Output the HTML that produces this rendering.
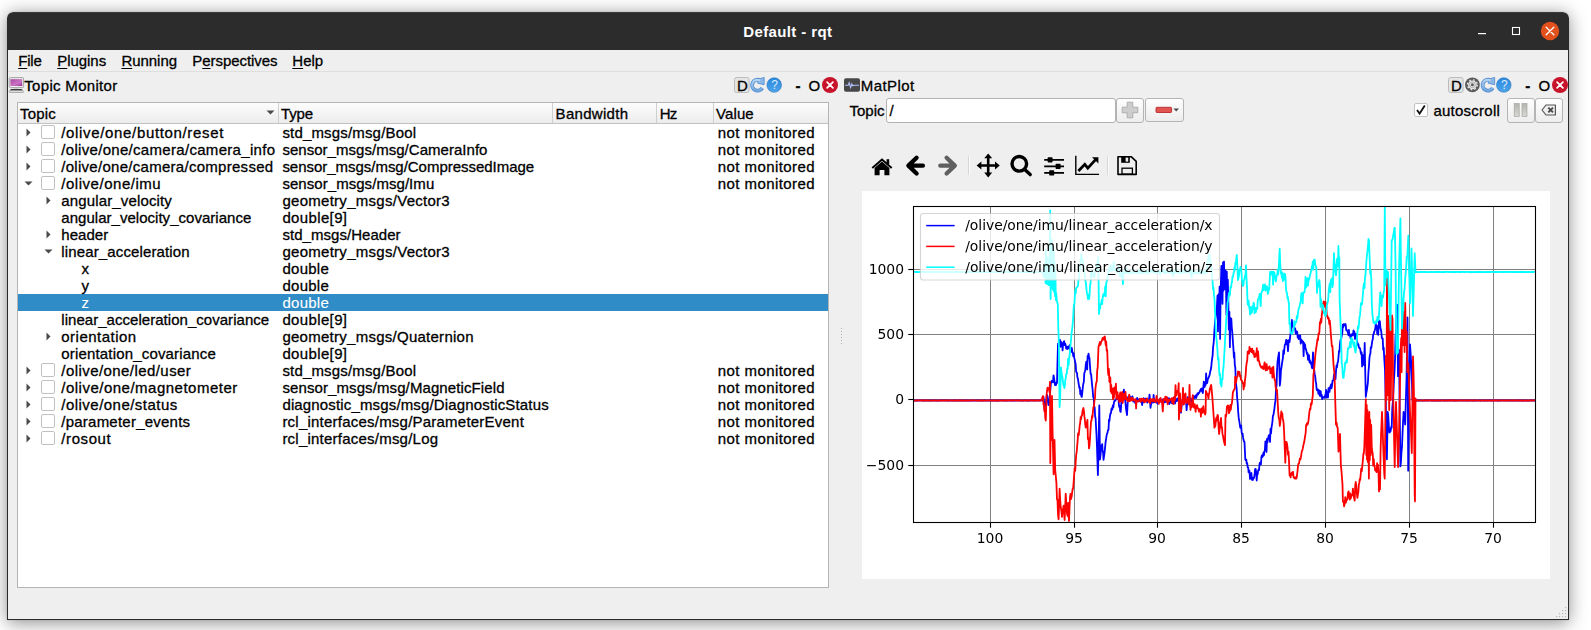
<!DOCTYPE html>
<html lang="en"><head><meta charset="utf-8"><title>Default - rqt</title>
<style>
html,body{margin:0;padding:0;}
body{width:1591px;height:630px;overflow:hidden;background:#fff;position:relative;font-family:"Liberation Sans", sans-serif;font-size:15px;color:#000;}
#win{position:absolute;left:7px;top:12px;width:1562px;height:608px;background:#efefef;border-radius:6px 6px 0 0;box-shadow:0 2.5px 18px 0 rgba(0,0,0,.44),0 0 1px rgba(0,0,0,.4);overflow:hidden;}
#tb{position:absolute;left:0;top:0;width:100%;height:38px;background:#2c2c2c;box-shadow:inset 0 1px 0 rgba(255,255,255,.07);border-radius:6px 6px 0 0;}
#edge{position:absolute;left:7px;top:50px;width:1560px;height:569px;border:1px solid #2b2b2b;border-top:none;}
.t{position:absolute;white-space:pre;line-height:1;font-size:15px;-webkit-text-stroke:0.3px currentColor;}
.t u{text-decoration:underline;text-underline-offset:1.5px;text-decoration-thickness:1.3px;}
.abs,.ab,.cb{position:absolute;}
.cb{width:12px;height:12px;border:1px solid #c0c0c0;background:#fff;border-radius:2px;}
#menuline{position:absolute;left:8px;top:71px;width:1560px;height:1px;background:#dedede;}
#tree{position:absolute;left:17px;top:102px;width:810px;height:484px;border:1px solid #b4b4b4;background:#fff;}
#hdr{position:absolute;left:18px;top:103px;width:810px;height:20px;background:linear-gradient(#fdfdfd,#ececec);border-bottom:1px solid #c2c2c2;}
.hs{position:absolute;top:103px;width:1px;height:20px;background:#cfcfcf;}
#sel{position:absolute;left:18px;top:294px;width:810px;height:17px;background:#308cc6;}
#inp{position:absolute;left:886px;top:98px;width:228px;height:23px;border:1px solid #b2b2b2;border-radius:3px;background:#fff;}
.btn{position:absolute;border:1px solid #b4b4b4;border-radius:3px;background:linear-gradient(#fefefe,#ededed);}
#canvas{position:absolute;left:862px;top:191px;width:688px;height:388px;background:#fff;}
</style></head><body>
<div id="win"><div id="tb"></div></div>
<div id="edge"></div>
<div id="menuline"></div>
<div id="tree"></div><div id="hdr"></div>
<div class="hs" style="left:278px"></div><div class="hs" style="left:552px"></div><div class="hs" style="left:656px"></div><div class="hs" style="left:713px"></div>
<svg class="abs" style="left:265.5px;top:109.5px" width="9" height="6" viewBox="0 0 9 6"><path d="M0.5 0.5 L8.5 0.5 L4.5 4.5 Z" fill="#4a4a4a"/></svg>
<div id="sel"></div>
<div id="inp"></div>
<div class="btn" style="left:1116px;top:98px;width:26px;height:23px"></div>
<div class="btn" style="left:1145px;top:98px;width:37px;height:22px"></div>
<div class="btn" style="left:1507px;top:98px;width:26px;height:23px"></div>
<div class="btn" style="left:1535px;top:98px;width:26px;height:23px"></div>
<div id="canvas"></div>
<svg class="abs" style="left:840px;top:327px" width="3" height="18" viewBox="0 0 3 18"><g fill="#aeaeae"><rect x="1" y="1" width="1" height="1"/><rect x="1" y="4" width="1" height="1"/><rect x="1" y="7" width="1" height="1"/><rect x="1" y="10" width="1" height="1"/><rect x="1" y="13" width="1" height="1"/><rect x="1" y="16" width="1" height="1"/></g></svg>
<div class="cb" style="left:41px;top:125px"></div>
<svg class="ab" style="left:26px;top:128px" width="6" height="9" viewBox="0 0 6 9"><path d="M0.5 0.5 L4.5 4.5 L0.5 8.5 Z" fill="#4a4a4a"/></svg>
<div class="cb" style="left:41px;top:142px"></div>
<svg class="ab" style="left:26px;top:145px" width="6" height="9" viewBox="0 0 6 9"><path d="M0.5 0.5 L4.5 4.5 L0.5 8.5 Z" fill="#4a4a4a"/></svg>
<div class="cb" style="left:41px;top:159px"></div>
<svg class="ab" style="left:26px;top:162px" width="6" height="9" viewBox="0 0 6 9"><path d="M0.5 0.5 L4.5 4.5 L0.5 8.5 Z" fill="#4a4a4a"/></svg>
<div class="cb" style="left:41px;top:176px"></div>
<svg class="ab" style="left:24px;top:181px" width="9" height="6" viewBox="0 0 9 6"><path d="M0.5 0.5 L8.5 0.5 L4.5 4.5 Z" fill="#4a4a4a"/></svg>
<svg class="ab" style="left:46px;top:196px" width="6" height="9" viewBox="0 0 6 9"><path d="M0.5 0.5 L4.5 4.5 L0.5 8.5 Z" fill="#4a4a4a"/></svg>
<svg class="ab" style="left:46px;top:230px" width="6" height="9" viewBox="0 0 6 9"><path d="M0.5 0.5 L4.5 4.5 L0.5 8.5 Z" fill="#4a4a4a"/></svg>
<svg class="ab" style="left:44px;top:249px" width="9" height="6" viewBox="0 0 9 6"><path d="M0.5 0.5 L8.5 0.5 L4.5 4.5 Z" fill="#4a4a4a"/></svg>
<svg class="ab" style="left:46px;top:332px" width="6" height="9" viewBox="0 0 6 9"><path d="M0.5 0.5 L4.5 4.5 L0.5 8.5 Z" fill="#4a4a4a"/></svg>
<div class="cb" style="left:41px;top:363px"></div>
<svg class="ab" style="left:26px;top:366px" width="6" height="9" viewBox="0 0 6 9"><path d="M0.5 0.5 L4.5 4.5 L0.5 8.5 Z" fill="#4a4a4a"/></svg>
<div class="cb" style="left:41px;top:380px"></div>
<svg class="ab" style="left:26px;top:383px" width="6" height="9" viewBox="0 0 6 9"><path d="M0.5 0.5 L4.5 4.5 L0.5 8.5 Z" fill="#4a4a4a"/></svg>
<div class="cb" style="left:41px;top:397px"></div>
<svg class="ab" style="left:26px;top:400px" width="6" height="9" viewBox="0 0 6 9"><path d="M0.5 0.5 L4.5 4.5 L0.5 8.5 Z" fill="#4a4a4a"/></svg>
<div class="cb" style="left:41px;top:414px"></div>
<svg class="ab" style="left:26px;top:417px" width="6" height="9" viewBox="0 0 6 9"><path d="M0.5 0.5 L4.5 4.5 L0.5 8.5 Z" fill="#4a4a4a"/></svg>
<div class="cb" style="left:41px;top:431px"></div>
<svg class="ab" style="left:26px;top:434px" width="6" height="9" viewBox="0 0 6 9"><path d="M0.5 0.5 L4.5 4.5 L0.5 8.5 Z" fill="#4a4a4a"/></svg>
<!-- title bar buttons -->
<svg class="abs" style="left:1470px;top:20px" width="95" height="24" viewBox="1470 20 95 24">
 <rect x="1478" y="33" width="8" height="1.2" fill="#fff"/>
 <rect x="1512.5" y="27.5" width="7" height="7" fill="none" stroke="#fff" stroke-width="1.1"/>
 <circle cx="1550" cy="31" r="9.2" fill="#e2511c"/>
 <path d="M1546.2 27.2 L1553.8 34.8 M1553.8 27.2 L1546.2 34.8" stroke="#fff" stroke-width="1.3" stroke-linecap="round"/>
</svg>
<!-- Topic monitor icon -->
<svg class="abs" style="left:8px;top:77px" width="17" height="16" viewBox="0 0 17 16">
 <defs><linearGradient id="scr" x1="0" y1="0" x2="1" y2="1"><stop offset="0" stop-color="#a8489f"/><stop offset="0.6" stop-color="#cc74c6"/><stop offset="1" stop-color="#9a2f92"/></linearGradient></defs>
 <rect x="1.2" y="0.6" width="14.4" height="10" rx="1.2" fill="#ececec" stroke="#9c9c9c" stroke-width="0.9"/>
 <rect x="2.4" y="2.2" width="11.8" height="6.8" fill="url(#scr)"/>
 <rect x="6" y="10.9" width="4.6" height="1.2" fill="#cfcfcf"/>
 <path d="M2.8 12.1 H13.8 L15 13.7 H1.6 Z" fill="#3c3c3c"/>
 <rect x="1.2" y="13.8" width="14.4" height="1.7" rx="0.8" fill="#f4f4f4" stroke="#9c9c9c" stroke-width="0.8"/>
</svg>
<!-- dock button group: left dock -->
<svg class="abs" style="left:733px;top:76px" width="107" height="18" viewBox="733 76 107 18">
 <defs>
  <linearGradient id="hb" x1="0" y1="0" x2="0" y2="1"><stop offset="0" stop-color="#2a86dc"/><stop offset="1" stop-color="#4ea6ea"/></linearGradient>
  <linearGradient id="rb" x1="0" y1="0" x2="0" y2="1"><stop offset="0" stop-color="#b4d3f0"/><stop offset="1" stop-color="#74a7de"/></linearGradient>
 </defs>
 <rect x="734.5" y="77.5" width="14.6" height="15" rx="2" fill="#e4e4e4" stroke="#bdbdbd"/>
 <g transform="translate(750,77)">
  <path d="M10.2 3.5 A5.4 5.4 0 1 0 12.2 10.9" fill="none" stroke="#4f8bd0" stroke-width="3.9"/><path d="M8.8 2.0 L14.2 0.4 L14.1 7.7 L7.6 6.2 Z" fill="#8ab7e6" stroke="#4f8bd0" stroke-width="0.8" stroke-linejoin="round"/><path d="M10.2 3.5 A5.4 5.4 0 1 0 12.2 10.9" fill="none" stroke="url(#rb)" stroke-width="2.3"/>
 </g>
 <circle cx="774.2" cy="85" r="7.3" fill="url(#hb)" stroke="#2c78bd" stroke-width="0.6"/>
 <circle cx="830" cy="85" r="8" fill="#c8142b"/>
 <path d="M827.1 82.1 L832.9 87.9 M832.9 82.1 L827.1 87.9" stroke="#fff" stroke-width="1.7" stroke-linecap="round"/>
</svg>
<span class="t" style="left:771.3px;top:78.5px;font-size:12px;color:#dcecfb;-webkit-text-stroke:0;">?</span>
<!-- matplot icon -->
<svg class="abs" style="left:843px;top:77px" width="18" height="16" viewBox="0 0 18 16">
 <rect x="1" y="1.2" width="16" height="13.5" rx="2" fill="#47474a"/>
 <path d="M2 8.2 L5.2 8.2 L6.2 5.8 L7.6 10.4 L8.8 7 L9.8 8.8 L11 8.2 L16 8.2" fill="none" stroke="#b3bffa" stroke-width="1.15"/>
</svg>
<!-- dock button group: right dock -->
<svg class="abs" style="left:1447px;top:76px" width="122" height="18" viewBox="1447 76 122 18">
 <rect x="1448.5" y="77.5" width="14.6" height="15" rx="2" fill="#e4e4e4" stroke="#bdbdbd"/>
 <circle cx="1472.4" cy="84.8" r="7.4" fill="#5b5b5b"/>
 <circle cx="1472.4" cy="84.8" r="4.9" fill="none" stroke="#e4e4e4" stroke-width="1.3" stroke-dasharray="1.75 2.1"/>
 <circle cx="1472.4" cy="84.8" r="4.4" fill="#e6e6e6"/>
 <circle cx="1472.4" cy="84.8" r="2.9" fill="none" stroke="#8e8e8e" stroke-width="0.6"/>
 <circle cx="1472.4" cy="84.8" r="1.5" fill="#5b5b5b"/>
 <g transform="translate(1480.5,77)">
  <path d="M10.2 3.5 A5.4 5.4 0 1 0 12.2 10.9" fill="none" stroke="#4f8bd0" stroke-width="3.9"/><path d="M8.8 2.0 L14.2 0.4 L14.1 7.7 L7.6 6.2 Z" fill="#8ab7e6" stroke="#4f8bd0" stroke-width="0.8" stroke-linejoin="round"/><path d="M10.2 3.5 A5.4 5.4 0 1 0 12.2 10.9" fill="none" stroke="url(#rb)" stroke-width="2.3"/>
 </g>
 <circle cx="1503.8" cy="85" r="7.3" fill="url(#hb)" stroke="#2c78bd" stroke-width="0.6"/>
 <circle cx="1560" cy="85" r="8" fill="#c8142b"/>
 <path d="M1557.1 82.1 L1562.9 87.9 M1562.9 82.1 L1557.1 87.9" stroke="#fff" stroke-width="1.7" stroke-linecap="round"/>
</svg>
<span class="t" style="left:1500.9px;top:78.5px;font-size:12px;color:#dcecfb;-webkit-text-stroke:0;">?</span>
<!-- plus button glyph -->
<svg class="abs" style="left:1121px;top:101px" width="18" height="18" viewBox="0 0 18 18">
 <path d="M6.2 1.2 H11.8 V6.2 H16.8 V11.8 H11.8 V16.8 H6.2 V11.8 H1.2 V6.2 H6.2 Z" fill="#cdcdcd" stroke="#a9a9a9" stroke-width="0.9"/>
</svg>
<!-- minus button glyph -->
<svg class="abs" style="left:1155px;top:106px" width="26" height="8" viewBox="0 0 26 8">
 <rect x="1" y="1.3" width="15.6" height="5.2" rx="0.8" fill="#e0534e" stroke="#b42a2f" stroke-width="0.9"/>
 <path d="M18.4 2.6 H24 L21.2 5.4 Z" fill="#4a4a4a"/>
</svg>
<!-- autoscroll checkbox -->
<svg class="abs" style="left:1414px;top:103px" width="14" height="14" viewBox="0 0 14 14">
 <rect x="0.5" y="0.5" width="13" height="13" rx="1.5" fill="#fff" stroke="#c2c2c2"/>
 <path d="M3 7 L5.6 10.6 L10.8 2.6" fill="none" stroke="#111" stroke-width="1.8" stroke-linejoin="miter"/>
</svg>
<!-- pause glyph -->
<svg class="abs" style="left:1513px;top:102px" width="16" height="16" viewBox="0 0 16 16">
 <defs><linearGradient id="pg" x1="0" y1="0" x2="0" y2="1"><stop offset="0" stop-color="#b5b5b1"/><stop offset="1" stop-color="#d6d7d2"/></linearGradient></defs>
 <rect x="1.2" y="1.6" width="5" height="12.8" fill="url(#pg)" stroke="#a5a5a2" stroke-width="0.7"/>
 <rect x="9" y="1.6" width="5" height="12.8" fill="url(#pg)" stroke="#a5a5a2" stroke-width="0.7"/>
</svg>
<!-- clear (backspace) glyph -->
<svg class="abs" style="left:1541px;top:104px" width="16" height="12" viewBox="0 0 16 12">
 <path d="M5 1 H14.4 V11 H5 L1 6 Z" fill="#efefef" stroke="#555" stroke-width="1.2" stroke-linejoin="round"/>
 <path d="M7.3 3.6 L12 8.4 M12 3.6 L7.3 8.4" stroke="#4a4a4a" stroke-width="2"/>
</svg>
<!-- matplotlib toolbar -->
<svg class="abs" style="left:866px;top:150px" width="280" height="32" viewBox="866 150 280 32">
 <!-- home -->
 <path d="M872.3 167.9 L882 159.6 L891.7 167.9" fill="none" stroke="#000" stroke-width="2"/>
 <path d="M874.6 168 L882 161.6 L889.4 168 V175.2 H884.4 V170 H879.6 V175.2 H874.6 Z" fill="#000"/>
 <rect x="886.6" y="159.2" width="2.6" height="5" fill="#000"/>
 <!-- back -->
 <path d="M916.6 157.8 L908.4 165.65 L916.6 173.5 M909.4 165.65 H922.9" fill="none" stroke="#000" stroke-width="4.3" stroke-linecap="round" stroke-linejoin="round"/>
 <!-- forward -->
 <path d="M946.6 157.8 L954.8 165.65 L946.6 173.5 M953.8 165.65 H940.3" fill="none" stroke="#606060" stroke-width="4.3" stroke-linecap="round" stroke-linejoin="round"/>
 <!-- sep -->
 <rect x="968" y="156" width="1" height="19" fill="#d6d6d6"/><rect x="969" y="156" width="1" height="19" fill="#fbfbfb"/>
 <!-- move -->
 <path d="M988.2 156 V175 M978.8 165.5 H997.6" stroke="#000" stroke-width="2.6"/>
 <path d="M988.2 153.4 L992.2 158.2 H984.2 Z M988.2 177.4 L992.2 172.6 H984.2 Z M976.6 165.5 L981.4 161.5 V169.5 Z M999.8 165.5 L995 161.5 V169.5 Z" fill="#000"/>
 <!-- zoom -->
 <circle cx="1019.3" cy="163.8" r="7.3" fill="none" stroke="#000" stroke-width="3.4"/>
 <path d="M1025 169.8 L1030.2 174.6" stroke="#000" stroke-width="3.4" stroke-linecap="round"/>
 <!-- sliders -->
 <path d="M1044.2 159.8 H1064 M1044.2 166.4 H1064 M1044.2 172.9 H1064" stroke="#000" stroke-width="1.7"/>
 <rect x="1047.6" y="157.2" width="5" height="5.2" rx="0.8" fill="#000"/>
 <rect x="1055.6" y="163.8" width="5" height="5.2" rx="0.8" fill="#000"/>
 <rect x="1049.2" y="170.3" width="5" height="5.2" rx="0.8" fill="#000"/>
 <!-- chart -->
 <path d="M1075.8 155.8 V174.4 H1099" fill="none" stroke="#000" stroke-width="1.4"/>
 <path d="M1078.4 171 L1084.8 164.4 L1087.8 168.2 L1095.6 159.6" fill="none" stroke="#000" stroke-width="2.8"/>
 <path d="M1092 157.2 H1098.4 V163.6 Z" fill="#000"/>
 <!-- sep -->
 <rect x="1107" y="156" width="1" height="19" fill="#d6d6d6"/><rect x="1108" y="156" width="1" height="19" fill="#fbfbfb"/>
 <!-- save -->
 <path d="M1118 156.8 H1131.4 L1136.2 161.4 V174.4 H1118 Z" fill="none" stroke="#000" stroke-width="1.6" stroke-linejoin="round"/>
 <rect x="1121.2" y="156.8" width="8.6" height="6" fill="#000"/>
 <rect x="1125.6" y="157.6" width="2.6" height="4" fill="#efefef"/>
 <rect x="1122" y="168.2" width="10.4" height="6" fill="none" stroke="#000" stroke-width="1.3"/>
</svg>
<!-- size grip -->
<svg class="abs" style="left:1554px;top:605px" width="14" height="14" viewBox="0 0 14 14">
 <g fill="#b9b9b9"><rect x="11" y="2" width="1.2" height="1.2"/><rect x="8" y="5" width="1.2" height="1.2"/><rect x="11" y="5" width="1.2" height="1.2"/><rect x="5" y="8" width="1.2" height="1.2"/><rect x="8" y="8" width="1.2" height="1.2"/><rect x="11" y="8" width="1.2" height="1.2"/><rect x="2" y="11" width="1.2" height="1.2"/><rect x="5" y="11" width="1.2" height="1.2"/><rect x="8" y="11" width="1.2" height="1.2"/><rect x="11" y="11" width="1.2" height="1.2"/></g>
</svg>

<svg class="abs" style="left:862px;top:191px;will-change:transform" width="688" height="388" viewBox="862 191 688 388">
<defs><clipPath id="ax"><rect x="913.5" y="206.5" width="622.0" height="316.0"/></clipPath></defs>
<g stroke="#808080" stroke-width="1" shape-rendering="crispEdges">
<line x1="990.5" y1="206.5" x2="990.5" y2="522.5"/>
<line x1="1074.5" y1="206.5" x2="1074.5" y2="522.5"/>
<line x1="1157.5" y1="206.5" x2="1157.5" y2="522.5"/>
<line x1="1241.5" y1="206.5" x2="1241.5" y2="522.5"/>
<line x1="1325.5" y1="206.5" x2="1325.5" y2="522.5"/>
<line x1="1409.5" y1="206.5" x2="1409.5" y2="522.5"/>
<line x1="1493.5" y1="206.5" x2="1493.5" y2="522.5"/>
<line x1="913.5" y1="269.5" x2="1535.5" y2="269.5"/>
<line x1="913.5" y1="334.5" x2="1535.5" y2="334.5"/>
<line x1="913.5" y1="399.5" x2="1535.5" y2="399.5"/>
<line x1="913.5" y1="465.5" x2="1535.5" y2="465.5"/>
</g>
<g clip-path="url(#ax)" fill="none" stroke-width="1.8" stroke-linejoin="round">
<path d="M913.0 400.5 L913.5 400.6 L913.9 400.5 L914.4 400.5 L914.8 400.4 L915.3 400.5 L915.7 400.6 L916.2 400.5 L916.6 400.6 L917.1 400.5 L917.5 400.5 L918.0 400.5 L918.4 400.3 L918.9 400.6 L919.3 400.6 L919.8 400.5 L920.2 400.3 L920.7 400.3 L921.1 400.4 L921.6 400.5 L922.0 400.5 L922.5 400.5 L922.9 400.6 L923.4 400.4 L923.8 400.5 L924.3 400.5 L924.7 400.4 L925.2 400.7 L925.6 400.6 L926.1 400.6 L926.5 400.4 L927.0 400.4 L927.4 400.5 L927.9 400.5 L928.3 400.6 L928.8 400.5 L929.2 400.5 L929.7 400.4 L930.2 400.4 L930.6 400.6 L931.1 400.4 L931.5 400.5 L932.0 400.5 L932.4 400.4 L932.9 400.5 L933.3 400.6 L933.8 400.3 L934.2 400.5 L934.7 400.5 L935.1 400.4 L935.6 400.5 L936.0 400.5 L936.5 400.4 L936.9 400.6 L937.4 400.6 L937.8 400.6 L938.3 400.6 L938.7 400.5 L939.2 400.5 L939.6 400.4 L940.1 400.6 L940.5 400.4 L941.0 400.5 L941.4 400.4 L941.9 400.4 L942.3 400.4 L942.8 400.6 L943.2 400.3 L943.7 400.4 L944.1 400.5 L944.6 400.6 L945.0 400.6 L945.5 400.3 L946.0 400.2 L946.4 400.5 L946.9 400.4 L947.3 400.4 L947.8 400.6 L948.2 400.6 L948.7 400.5 L949.1 400.5 L949.6 400.5 L950.0 400.7 L950.5 400.6 L950.9 400.6 L951.4 400.6 L951.8 400.3 L952.3 400.6 L952.7 400.6 L953.2 400.6 L953.6 400.3 L954.1 400.4 L954.5 400.6 L955.0 400.3 L955.4 400.5 L955.9 400.6 L956.3 400.4 L956.8 400.7 L957.2 400.6 L957.7 400.5 L958.1 400.5 L958.6 400.6 L959.0 400.5 L959.5 400.6 L959.9 400.4 L960.4 400.5 L960.8 400.6 L961.3 400.5 L961.8 400.4 L962.2 400.6 L962.7 400.6 L963.1 400.5 L963.6 400.4 L964.0 400.5 L964.5 400.5 L964.9 400.5 L965.4 400.6 L965.8 400.4 L966.3 400.6 L966.7 400.4 L967.2 400.4 L967.6 400.6 L968.1 400.6 L968.5 400.6 L969.0 400.5 L969.4 400.5 L969.9 400.5 L970.3 400.6 L970.8 400.5 L971.2 400.5 L971.7 400.6 L972.1 400.5 L972.6 400.6 L973.0 400.6 L973.5 400.7 L973.9 400.5 L974.4 400.5 L974.8 400.5 L975.3 400.5 L975.7 400.6 L976.2 400.5 L976.6 400.5 L977.1 400.7 L977.5 400.2 L978.0 400.4 L978.5 400.5 L978.9 400.5 L979.4 400.5 L979.8 400.5 L980.3 400.6 L980.7 400.5 L981.2 400.4 L981.6 400.7 L982.1 400.5 L982.5 400.4 L983.0 400.5 L983.4 400.5 L983.9 400.5 L984.3 400.2 L984.8 400.5 L985.2 400.6 L985.7 400.4 L986.1 400.5 L986.6 400.6 L987.0 400.6 L987.5 400.6 L987.9 400.3 L988.4 400.5 L988.8 400.5 L989.3 400.6 L989.7 400.6 L990.2 400.2 L990.6 400.6 L991.1 400.4 L991.5 400.6 L992.0 400.4 L992.4 400.5 L992.9 400.6 L993.3 400.5 L993.8 400.5 L994.2 400.6 L994.7 400.5 L995.2 400.5 L995.6 400.7 L996.1 400.6 L996.5 400.5 L997.0 400.8 L997.4 400.4 L997.9 400.6 L998.3 400.5 L998.8 400.5 L999.2 400.6 L999.7 400.5 L1000.1 400.6 L1000.6 400.3 L1001.0 400.3 L1001.5 400.6 L1001.9 400.4 L1002.4 400.4 L1002.8 400.4 L1003.3 400.6 L1003.7 400.6 L1004.2 400.6 L1004.6 400.4 L1005.1 400.5 L1005.5 400.4 L1006.0 400.6 L1006.4 400.7 L1006.9 400.4 L1007.3 400.7 L1007.8 400.6 L1008.2 400.5 L1008.7 400.3 L1009.1 400.6 L1009.6 400.5 L1010.0 400.4 L1010.5 400.5 L1011.0 400.5 L1011.4 400.6 L1011.9 400.4 L1012.3 400.6 L1012.8 400.6 L1013.2 400.6 L1013.7 400.5 L1014.1 400.4 L1014.6 400.6 L1015.0 400.5 L1015.5 400.5 L1015.9 400.6 L1016.4 400.5 L1016.8 400.3 L1017.3 400.5 L1017.7 400.3 L1018.2 400.6 L1018.6 400.5 L1019.1 400.4 L1019.5 400.5 L1020.0 400.6 L1020.4 400.5 L1020.9 400.6 L1021.3 400.5 L1021.8 400.6 L1022.2 400.6 L1022.7 400.7 L1023.1 400.4 L1023.6 400.6 L1024.0 400.3 L1024.5 400.4 L1024.9 400.3 L1025.4 400.6 L1025.8 400.4 L1026.3 400.5 L1026.8 400.5 L1027.2 400.5 L1027.7 400.4 L1028.1 400.5 L1028.6 400.7 L1029.0 400.5 L1029.5 400.6 L1029.9 400.6 L1030.4 400.5 L1030.8 400.4 L1031.3 400.4 L1031.7 400.6 L1032.2 400.3 L1032.6 400.4 L1033.1 400.6 L1033.5 400.6 L1034.0 400.5 L1034.4 400.6 L1034.9 400.5 L1035.3 400.4 L1035.8 400.3 L1036.2 400.4 L1036.7 400.6 L1037.1 400.4 L1037.6 400.4 L1038.0 400.4 L1038.5 400.3 L1038.9 400.5 L1039.4 400.4 L1039.8 400.5 L1040.3 400.3 L1040.7 400.5 L1041.2 400.4 L1041.6 400.3 L1042.1 400.6 L1042.5 400.5 L1043.0 400.5 L1043.5 396.9 L1044.0 400.9 L1044.5 409.6 L1045.0 405.0 L1045.5 402.5 L1046.0 400.8 L1046.5 398.5 L1047.0 395.0 L1047.5 396.5 L1048.0 402.2 L1048.5 405.2 L1049.0 404.0 L1049.5 400.9 L1050.0 393.1 L1050.4 389.2 L1050.9 383.4 L1051.4 381.4 L1051.9 380.8 L1052.5 381.8 L1053.0 382.3 L1053.5 375.3 L1054.0 377.8 L1054.5 381.2 L1055.0 385.1 L1055.5 382.8 L1056.0 385.2 L1056.5 382.4 L1057.0 383.0 L1057.5 361.7 L1058.0 343.7 L1058.5 346.1 L1059.0 339.8 L1059.5 343.3 L1060.0 340.0 L1060.5 346.8 L1061.0 341.7 L1061.5 345.3 L1062.1 343.3 L1062.6 350.4 L1063.1 343.2 L1063.6 342.0 L1064.1 341.1 L1064.6 345.1 L1065.2 343.7 L1065.7 345.3 L1066.2 348.5 L1066.7 346.9 L1067.2 349.0 L1067.6 347.8 L1068.1 346.3 L1068.6 348.2 L1069.0 348.5 L1069.5 346.6 L1070.0 344.8 L1070.4 350.8 L1070.9 348.2 L1071.4 351.8 L1071.8 348.0 L1072.3 351.6 L1072.8 353.1 L1073.3 356.4 L1073.7 353.5 L1074.2 357.6 L1074.7 359.6 L1075.2 362.6 L1075.6 363.4 L1076.1 371.2 L1076.5 372.5 L1077.0 372.9 L1077.4 377.4 L1077.9 378.6 L1078.4 382.1 L1078.9 385.1 L1079.4 388.1 L1079.8 387.3 L1080.3 394.1 L1080.8 390.6 L1081.3 396.2 L1081.8 396.9 L1082.3 392.6 L1082.8 387.5 L1083.3 383.7 L1083.8 382.0 L1084.3 373.1 L1084.8 371.8 L1085.3 369.9 L1085.8 364.3 L1086.3 361.7 L1086.7 364.0 L1087.2 369.5 L1087.6 356.0 L1088.1 358.3 L1088.5 353.7 L1089.0 356.4 L1089.5 358.2 L1090.1 367.9 L1090.6 373.8 L1091.1 374.0 L1091.6 379.6 L1092.2 386.0 L1092.7 390.5 L1093.2 397.1 L1093.7 398.0 L1094.2 406.4 L1094.7 407.7 L1095.1 416.2 L1095.6 418.4 L1096.1 427.7 L1096.5 434.8 L1097.0 447.1 L1097.5 462.8 L1097.9 475.0 L1098.4 455.2 L1098.8 431.1 L1099.3 405.5 L1100.0 459.5 L1100.6 454.4 L1101.1 448.5 L1101.7 445.2 L1102.2 444.1 L1102.6 450.7 L1103.1 452.4 L1103.5 459.8 L1104.0 456.3 L1104.5 453.1 L1105.1 447.4 L1105.6 442.0 L1106.1 438.8 L1106.6 435.6 L1107.0 433.8 L1107.5 432.6 L1108.0 430.0 L1108.5 429.8 L1109.0 419.6 L1109.4 421.1 L1109.9 416.6 L1110.4 413.5 L1110.9 413.3 L1111.4 409.3 L1111.8 408.1 L1112.3 409.7 L1112.8 405.5 L1113.3 407.3 L1113.9 402.8 L1114.5 400.7 L1115.0 401.0 L1115.5 400.3 L1116.0 399.4 L1116.5 398.1 L1117.0 398.8 L1117.5 396.9 L1118.0 396.0 L1118.5 398.5 L1118.9 404.8 L1119.3 407.2 L1119.8 406.1 L1120.2 411.2 L1120.7 411.9 L1121.3 403.3 L1122.0 398.0 L1122.5 394.9 L1123.0 394.8 L1123.4 392.1 L1123.9 389.7 L1124.4 395.4 L1124.9 397.5 L1125.5 403.1 L1126.0 408.5 L1126.5 411.9 L1127.0 415.0 L1127.5 406.3 L1128.0 397.2 L1128.5 397.0 L1129.0 397.2 L1129.5 395.6 L1130.0 398.1 L1130.5 399.4 L1131.0 397.2 L1131.5 399.6 L1132.0 399.8 L1132.5 396.5 L1132.9 399.6 L1133.4 401.7 L1133.8 400.6 L1134.3 400.9 L1134.8 400.8 L1135.2 403.0 L1135.7 402.6 L1136.2 400.0 L1136.6 400.9 L1137.1 398.0 L1137.5 399.3 L1138.0 399.1 L1138.5 401.3 L1138.9 401.5 L1139.4 400.9 L1139.8 398.7 L1140.3 400.5 L1140.8 400.4 L1141.2 401.5 L1141.7 402.9 L1142.2 405.0 L1142.6 400.9 L1143.1 399.5 L1143.5 398.2 L1144.0 402.4 L1144.5 401.5 L1144.9 400.3 L1145.4 398.6 L1145.8 400.2 L1146.3 399.2 L1146.8 398.7 L1147.2 402.7 L1147.7 401.1 L1148.2 399.8 L1148.6 399.6 L1149.1 399.2 L1149.5 394.6 L1150.0 400.2 L1150.5 407.8 L1150.9 405.0 L1151.8 401.9 L1152.3 401.6 L1152.7 399.5 L1153.2 402.5 L1153.6 394.9 L1154.1 400.5 L1154.5 400.4 L1155.0 402.4 L1155.4 401.7 L1155.9 400.8 L1156.3 401.2 L1156.8 402.7 L1157.3 401.5 L1157.7 403.8 L1158.2 400.6 L1158.6 401.4 L1159.1 402.0 L1159.5 400.0 L1160.0 398.8 L1160.4 401.5 L1160.9 399.8 L1161.4 401.1 L1161.8 400.9 L1162.3 400.6 L1162.7 402.1 L1163.2 399.1 L1163.6 400.1 L1164.1 401.2 L1164.5 402.4 L1165.0 400.9 L1165.4 401.9 L1165.9 400.3 L1166.4 401.7 L1166.8 401.4 L1167.3 400.3 L1167.7 397.9 L1168.2 399.3 L1168.6 400.7 L1169.1 404.1 L1169.5 398.5 L1170.0 402.9 L1170.4 400.6 L1170.9 400.4 L1171.4 402.7 L1171.8 400.0 L1172.3 403.7 L1172.7 400.3 L1173.2 399.7 L1173.6 397.6 L1174.1 400.8 L1174.5 400.4 L1175.0 403.6 L1175.5 399.6 L1175.9 399.1 L1176.4 401.1 L1176.8 401.2 L1177.3 398.5 L1177.7 399.6 L1178.2 399.8 L1178.6 400.6 L1179.1 400.0 L1179.5 401.7 L1180.0 399.4 L1180.5 405.8 L1181.0 412.7 L1181.5 407.5 L1182.0 401.4 L1182.5 400.6 L1183.0 401.8 L1183.5 400.5 L1184.0 398.0 L1184.5 401.1 L1185.0 399.6 L1185.5 400.4 L1186.0 399.6 L1186.6 410.2 L1187.2 402.7 L1187.7 397.1 L1188.2 402.7 L1188.6 400.7 L1189.1 398.1 L1189.6 397.4 L1190.1 400.2 L1190.6 401.1 L1191.0 399.7 L1191.5 401.9 L1192.0 399.0 L1192.5 398.1 L1192.9 399.7 L1193.4 396.0 L1193.9 398.2 L1194.3 396.5 L1194.8 396.8 L1195.2 397.9 L1195.7 395.4 L1196.2 397.9 L1196.6 396.5 L1197.1 394.3 L1197.6 393.2 L1198.0 394.6 L1198.5 392.9 L1199.0 393.3 L1199.5 392.3 L1199.9 390.8 L1200.4 390.2 L1200.9 389.0 L1201.4 390.9 L1201.9 388.4 L1202.3 391.5 L1202.8 393.1 L1203.3 388.0 L1203.8 381.7 L1204.2 382.3 L1204.7 387.0 L1205.2 383.0 L1205.7 385.0 L1206.1 373.4 L1206.6 380.5 L1207.1 383.0 L1207.5 381.1 L1208.0 378.6 L1208.5 378.1 L1208.9 376.8 L1209.4 375.7 L1209.8 373.8 L1210.3 371.0 L1210.7 370.1 L1211.2 367.5 L1211.7 362.0 L1212.2 358.1 L1212.6 355.6 L1213.1 346.8 L1213.6 343.7 L1214.1 336.1 L1214.7 326.4 L1215.2 319.9 L1215.7 317.2 L1216.2 312.0 L1216.7 309.8 L1217.5 295.6 L1218.0 331.4 L1218.5 294.3 L1219.0 308.0 L1219.6 286.7 L1220.1 338.9 L1220.6 292.4 L1221.4 266.0 L1221.9 282.8 L1222.5 303.8 L1223.0 262.5 L1223.5 290.5 L1224.0 261.6 L1224.5 289.1 L1224.9 270.1 L1225.4 286.7 L1225.9 271.2 L1226.4 314.7 L1226.8 271.6 L1227.3 309.2 L1227.8 279.7 L1228.3 300.3 L1228.8 329.5 L1229.4 312.0 L1229.9 347.2 L1230.4 318.1 L1230.8 320.8 L1231.3 318.6 L1231.8 327.8 L1232.3 332.6 L1232.9 341.5 L1233.4 348.4 L1233.9 357.5 L1234.3 352.5 L1234.8 364.8 L1235.3 367.5 L1235.9 383.3 L1236.6 388.0 L1237.1 397.1 L1237.7 403.3 L1238.2 411.9 L1238.7 417.9 L1239.3 421.1 L1239.8 424.6 L1240.3 427.8 L1240.7 427.3 L1241.2 425.5 L1241.6 432.1 L1242.1 434.0 L1242.6 433.6 L1243.1 437.7 L1243.5 439.9 L1244.0 441.4 L1244.5 442.0 L1245.3 459.5 L1245.8 460.3 L1246.3 459.7 L1246.7 463.7 L1247.2 463.2 L1247.7 467.4 L1248.2 467.5 L1248.6 472.4 L1249.1 470.4 L1249.5 470.9 L1250.0 478.9 L1250.4 473.8 L1250.9 474.6 L1251.4 473.0 L1251.8 479.6 L1252.3 477.7 L1252.8 480.0 L1253.2 477.6 L1253.7 478.5 L1254.2 476.7 L1254.7 473.8 L1255.1 469.1 L1255.6 469.0 L1256.1 471.6 L1256.7 480.5 L1257.2 473.8 L1257.7 474.2 L1258.1 470.7 L1258.6 469.5 L1259.0 470.2 L1259.5 464.2 L1259.9 462.6 L1260.4 462.7 L1260.9 464.5 L1261.4 457.2 L1261.9 455.3 L1262.4 457.1 L1262.9 456.1 L1263.4 452.6 L1263.9 455.4 L1264.4 451.6 L1264.9 449.8 L1265.4 441.4 L1266.0 446.4 L1266.5 452.0 L1267.0 438.9 L1267.5 442.0 L1268.0 438.6 L1268.5 436.5 L1269.0 435.1 L1269.5 435.7 L1270.0 442.0 L1270.5 428.9 L1271.0 433.5 L1271.5 427.7 L1272.0 424.7 L1272.5 421.3 L1272.9 415.9 L1273.4 415.1 L1273.9 411.9 L1274.4 408.8 L1275.0 403.1 L1275.5 400.8 L1276.0 389.1 L1276.6 385.0 L1277.0 371.4 L1277.5 362.0 L1278.0 358.1 L1278.5 355.3 L1279.0 352.4 L1279.8 385.7 L1280.4 380.8 L1281.0 370.0 L1281.5 367.0 L1282.0 363.5 L1282.5 360.5 L1282.9 357.8 L1283.4 350.3 L1283.9 354.0 L1284.4 348.6 L1284.8 344.9 L1285.3 344.4 L1285.8 341.8 L1286.2 340.0 L1286.7 344.5 L1287.1 340.4 L1287.6 344.6 L1288.0 351.2 L1288.5 342.9 L1289.0 340.0 L1289.5 342.2 L1289.9 339.2 L1290.4 334.5 L1290.9 331.7 L1291.4 330.7 L1291.9 319.9 L1292.3 326.7 L1292.8 326.2 L1293.3 326.2 L1293.8 327.5 L1294.3 327.1 L1294.8 329.2 L1295.2 328.6 L1295.7 333.6 L1296.2 331.2 L1296.7 332.4 L1297.2 331.7 L1297.7 337.6 L1298.2 335.7 L1298.7 339.0 L1299.2 335.6 L1299.7 338.4 L1300.2 335.4 L1300.7 343.6 L1301.2 339.7 L1301.7 340.3 L1302.2 341.2 L1302.6 342.8 L1303.1 341.6 L1303.6 356.0 L1304.1 342.9 L1304.6 347.4 L1305.0 344.4 L1305.5 348.4 L1306.0 349.2 L1306.5 351.6 L1307.0 354.2 L1307.5 353.0 L1308.0 359.8 L1308.5 355.4 L1309.0 355.2 L1309.5 362.1 L1310.0 360.3 L1310.5 363.7 L1310.9 362.1 L1311.4 363.7 L1311.8 367.4 L1312.3 368.3 L1313.0 352.4 L1313.6 360.4 L1314.1 368.8 L1314.7 374.6 L1315.2 376.1 L1315.7 381.7 L1316.1 382.8 L1316.6 388.9 L1317.0 390.3 L1317.5 389.3 L1318.0 389.7 L1318.4 393.8 L1318.8 390.3 L1319.3 390.3 L1319.8 395.8 L1320.2 395.2 L1320.7 391.2 L1321.2 396.6 L1321.7 394.8 L1322.2 399.1 L1322.7 397.1 L1323.2 397.7 L1323.7 397.6 L1324.2 396.8 L1324.7 397.8 L1325.2 395.4 L1325.6 393.9 L1326.1 389.8 L1326.6 397.7 L1327.1 391.7 L1327.6 392.9 L1328.0 397.5 L1328.5 388.1 L1329.0 390.5 L1329.5 391.9 L1330.0 387.3 L1330.5 386.4 L1331.0 384.4 L1331.5 388.4 L1332.0 385.7 L1332.5 380.8 L1333.0 380.6 L1333.5 379.6 L1334.0 374.3 L1334.5 378.7 L1335.0 372.4 L1335.5 379.1 L1336.0 371.4 L1336.5 365.3 L1337.0 367.4 L1337.5 362.8 L1338.0 362.1 L1338.5 357.0 L1339.0 350.9 L1339.5 351.8 L1339.9 344.6 L1340.4 340.2 L1340.9 339.7 L1341.4 337.7 L1341.9 334.5 L1342.3 333.1 L1342.8 324.6 L1343.3 327.0 L1343.8 324.1 L1344.3 324.7 L1344.8 325.4 L1345.3 324.0 L1345.7 324.6 L1346.2 330.2 L1346.6 329.5 L1347.1 331.1 L1347.5 331.1 L1348.0 333.3 L1348.5 335.3 L1348.9 329.8 L1349.4 335.7 L1349.8 334.1 L1350.3 336.9 L1350.7 338.4 L1351.2 336.5 L1351.7 334.9 L1352.1 334.0 L1352.6 335.4 L1353.0 334.8 L1353.5 330.3 L1353.9 333.2 L1354.4 331.7 L1354.9 338.9 L1355.4 337.1 L1356.0 333.8 L1356.5 338.1 L1357.0 340.7 L1357.5 342.9 L1358.0 345.2 L1358.4 344.3 L1358.9 347.3 L1359.3 348.0 L1359.8 348.0 L1360.2 348.8 L1360.7 352.4 L1361.2 354.3 L1361.6 352.4 L1362.1 366.4 L1362.5 354.7 L1363.0 360.3 L1363.6 357.0 L1364.1 365.2 L1364.7 342.9 L1365.2 370.2 L1365.8 396.8 L1366.3 393.2 L1366.8 390.6 L1367.4 386.4 L1367.9 382.5 L1368.4 372.7 L1368.9 367.0 L1369.4 358.7 L1369.9 354.6 L1370.4 353.6 L1370.8 347.1 L1371.3 348.0 L1371.8 344.4 L1372.3 340.7 L1372.8 339.2 L1373.2 334.5 L1373.7 334.1 L1374.2 331.7 L1374.7 330.6 L1375.3 328.6 L1375.8 323.8 L1376.3 326.9 L1376.8 325.6 L1377.2 333.8 L1377.7 330.7 L1378.2 334.9 L1379.0 320.6 L1379.5 320.8 L1379.9 321.6 L1380.4 328.1 L1380.8 329.3 L1381.3 331.7 L1381.8 337.7 L1382.3 338.6 L1382.7 338.4 L1383.2 349.6 L1383.7 347.6 L1384.3 359.2 L1385.0 370.0 L1385.5 392.0 L1386.0 412.4 L1386.4 440.5 L1386.9 459.3 L1387.7 411.9 L1388.2 415.2 L1388.8 425.1 L1389.3 432.5 L1389.8 429.2 L1390.3 431.8 L1390.7 430.6 L1391.2 426.8 L1391.7 427.7 L1392.3 408.2 L1393.0 400.0 L1393.5 389.8 L1394.0 379.1 L1394.5 371.6 L1395.0 360.0 L1395.5 336.6 L1396.1 331.7 L1396.7 314.1 L1397.2 304.8 L1398.0 376.2 L1398.5 363.3 L1399.0 350.0 L1399.5 391.3 L1399.9 426.2 L1400.4 466.4 L1400.9 462.3 L1401.5 451.8 L1402.0 446.8 L1402.5 434.2 L1403.1 420.9 L1403.6 411.9 L1404.1 415.0 L1404.7 418.4 L1405.2 424.6 L1405.8 402.5 L1406.5 380.0 L1407.0 349.3 L1407.5 317.5 L1408.2 470.7 L1409.0 400.0 L1409.5 371.1 L1410.0 344.4 L1410.5 351.2 L1411.0 359.8 L1411.5 369.8 L1412.0 384.5 L1412.5 400.5 L1413.0 399.6 L1413.5 402.5 L1414.0 405.4 L1414.5 403.3 L1415.0 403.1 L1415.5 400.2 L1416.0 400.5 L1416.5 400.5 L1416.9 400.3 L1417.4 400.4 L1417.8 400.6 L1418.3 400.5 L1418.7 400.5 L1419.2 400.5 L1419.6 400.5 L1420.1 400.4 L1420.5 400.5 L1421.0 400.5 L1421.4 400.7 L1421.9 400.5 L1422.3 400.7 L1422.8 400.7 L1423.2 400.7 L1423.7 400.6 L1424.1 400.5 L1424.6 400.5 L1425.0 400.5 L1425.5 400.4 L1425.9 400.5 L1426.4 400.4 L1426.8 400.7 L1427.3 400.6 L1427.7 400.5 L1428.2 400.3 L1428.6 400.5 L1429.1 400.5 L1429.5 400.4 L1430.0 400.4 L1430.4 400.3 L1430.9 400.6 L1431.3 400.5 L1431.8 400.8 L1432.2 400.5 L1432.7 400.5 L1433.1 400.6 L1433.6 400.5 L1434.0 400.5 L1434.5 400.5 L1434.9 400.4 L1435.4 400.6 L1435.8 400.6 L1436.3 400.7 L1436.8 400.5 L1437.2 400.5 L1437.7 400.4 L1438.1 400.6 L1438.6 400.4 L1439.0 400.6 L1439.5 400.6 L1439.9 400.6 L1440.4 400.4 L1440.8 400.6 L1441.3 400.4 L1441.7 400.4 L1442.2 400.4 L1442.6 400.6 L1443.1 400.7 L1443.5 400.4 L1444.0 400.4 L1444.4 400.5 L1444.9 400.8 L1445.3 400.6 L1445.8 400.4 L1446.2 400.3 L1446.7 400.4 L1447.1 400.6 L1447.6 400.7 L1448.0 400.5 L1448.5 400.4 L1448.9 400.4 L1449.4 400.3 L1449.8 400.6 L1450.3 400.4 L1450.7 400.6 L1451.2 400.3 L1451.6 400.4 L1452.1 400.5 L1452.5 400.4 L1453.0 400.6 L1453.4 400.5 L1453.9 400.4 L1454.3 400.6 L1454.8 400.6 L1455.2 400.3 L1455.7 400.7 L1456.2 400.5 L1456.6 400.6 L1457.1 400.3 L1457.5 400.4 L1458.0 400.5 L1458.4 400.6 L1458.9 400.4 L1459.3 400.4 L1459.8 400.3 L1460.2 400.5 L1460.7 400.5 L1461.1 400.3 L1461.6 400.4 L1462.0 400.6 L1462.5 400.7 L1462.9 400.6 L1463.4 400.5 L1463.8 400.4 L1464.3 400.4 L1464.7 400.4 L1465.2 400.5 L1465.6 400.5 L1466.1 400.7 L1466.5 400.5 L1467.0 400.4 L1467.4 400.7 L1467.9 400.6 L1468.3 400.5 L1468.8 400.4 L1469.2 400.3 L1469.7 400.4 L1470.1 400.6 L1470.6 400.4 L1471.0 400.4 L1471.5 400.5 L1471.9 400.5 L1472.4 400.6 L1472.8 400.6 L1473.3 400.6 L1473.7 400.4 L1474.2 400.6 L1474.6 400.4 L1475.1 400.6 L1475.5 400.5 L1476.0 400.5 L1476.5 400.6 L1476.9 400.5 L1477.4 400.6 L1477.8 400.6 L1478.3 400.5 L1478.7 400.4 L1479.2 400.4 L1479.6 400.4 L1480.1 400.5 L1480.5 400.5 L1481.0 400.8 L1481.4 400.6 L1481.9 400.6 L1482.3 400.4 L1482.8 400.4 L1483.2 400.5 L1483.7 400.5 L1484.1 400.4 L1484.6 400.7 L1485.0 400.4 L1485.5 400.6 L1485.9 400.3 L1486.4 400.5 L1486.8 400.5 L1487.3 400.5 L1487.7 400.6 L1488.2 400.5 L1488.6 400.5 L1489.1 400.3 L1489.5 400.4 L1490.0 400.3 L1490.4 400.6 L1490.9 400.5 L1491.3 400.5 L1491.8 400.4 L1492.2 400.4 L1492.7 400.7 L1493.1 400.7 L1493.6 400.5 L1494.0 400.6 L1494.5 400.3 L1494.9 400.3 L1495.4 400.5 L1495.8 400.4 L1496.3 400.4 L1496.8 400.5 L1497.2 400.8 L1497.7 400.4 L1498.1 400.5 L1498.6 400.5 L1499.0 400.5 L1499.5 400.6 L1499.9 400.7 L1500.4 400.4 L1500.8 400.5 L1501.3 400.5 L1501.7 400.5 L1502.2 400.3 L1502.6 400.3 L1503.1 400.3 L1503.5 400.6 L1504.0 400.5 L1504.4 400.5 L1504.9 400.3 L1505.3 400.5 L1505.8 400.4 L1506.2 400.4 L1506.7 400.4 L1507.1 400.6 L1507.6 400.6 L1508.0 400.5 L1508.5 400.6 L1508.9 400.4 L1509.4 400.5 L1509.8 400.5 L1510.3 400.6 L1510.7 400.5 L1511.2 400.5 L1511.6 400.5 L1512.1 400.4 L1512.5 400.7 L1513.0 400.6 L1513.4 400.5 L1513.9 400.7 L1514.3 400.6 L1514.8 400.3 L1515.2 400.6 L1515.7 400.6 L1516.2 400.7 L1516.6 400.6 L1517.1 400.6 L1517.5 400.4 L1518.0 400.4 L1518.4 400.5 L1518.9 400.6 L1519.3 400.4 L1519.8 400.5 L1520.2 400.5 L1520.7 400.5 L1521.1 400.5 L1521.6 400.5 L1522.0 400.4 L1522.5 400.6 L1522.9 400.7 L1523.4 400.5 L1523.8 400.6 L1524.3 400.5 L1524.7 400.6 L1525.2 400.5 L1525.6 400.4 L1526.1 400.6 L1526.5 400.6 L1527.0 400.4 L1527.4 400.7 L1527.9 400.7 L1528.3 400.7 L1528.8 400.7 L1529.2 400.6 L1529.7 400.5 L1530.1 400.4 L1530.6 400.4 L1531.0 400.5 L1531.5 400.5 L1531.9 400.6 L1532.4 400.3 L1532.8 400.7 L1533.3 400.7 L1533.7 400.5 L1534.2 400.6 L1534.6 400.5 L1535.1 400.5 L1535.5 400.5 L1536.0 400.5" stroke="#0000ff"/>
<path d="M913.0 400.6 L913.5 400.5 L913.9 400.5 L914.4 400.5 L914.8 400.6 L915.3 400.7 L915.7 400.5 L916.2 400.4 L916.6 400.5 L917.1 400.5 L917.5 400.4 L918.0 400.4 L918.4 400.5 L918.9 400.6 L919.3 400.4 L919.8 400.4 L920.2 400.5 L920.7 400.4 L921.1 400.5 L921.6 400.5 L922.0 400.5 L922.5 400.4 L922.9 400.5 L923.4 400.5 L923.8 400.5 L924.3 400.4 L924.7 400.6 L925.2 400.3 L925.6 400.5 L926.1 400.5 L926.5 400.6 L927.0 400.4 L927.4 400.6 L927.9 400.4 L928.3 400.6 L928.8 400.7 L929.2 400.5 L929.7 400.5 L930.1 400.4 L930.6 400.6 L931.0 400.6 L931.5 400.5 L931.9 400.4 L932.4 400.5 L932.8 400.6 L933.3 400.6 L933.7 400.6 L934.2 400.3 L934.6 400.4 L935.1 400.6 L935.5 400.4 L936.0 400.6 L936.4 400.7 L936.9 400.6 L937.3 400.6 L937.8 400.5 L938.2 400.4 L938.7 400.5 L939.1 400.5 L939.6 400.5 L940.0 400.6 L940.5 400.5 L940.9 400.5 L941.4 400.5 L941.8 400.5 L942.3 400.7 L942.7 400.5 L943.2 400.5 L943.6 400.5 L944.1 400.4 L944.5 400.6 L945.0 400.5 L945.5 400.4 L945.9 400.4 L946.4 400.5 L946.8 400.5 L947.3 400.6 L947.7 400.4 L948.2 400.5 L948.6 400.5 L949.1 400.4 L949.5 400.5 L950.0 400.5 L950.4 400.6 L950.9 400.5 L951.3 400.5 L951.8 400.3 L952.2 400.4 L952.7 400.6 L953.1 400.6 L953.6 400.5 L954.0 400.4 L954.5 400.6 L954.9 400.3 L955.4 400.4 L955.8 400.6 L956.3 400.6 L956.7 400.4 L957.2 400.3 L957.6 400.6 L958.1 400.5 L958.5 400.4 L959.0 400.5 L959.4 400.6 L959.9 400.2 L960.3 400.6 L960.8 400.6 L961.2 400.3 L961.7 400.6 L962.1 400.3 L962.6 400.6 L963.0 400.5 L963.5 400.7 L963.9 400.4 L964.4 400.5 L964.8 400.6 L965.3 400.4 L965.7 400.4 L966.2 400.5 L966.6 400.5 L967.1 400.4 L967.5 400.5 L968.0 400.6 L968.4 400.5 L968.9 400.7 L969.3 400.5 L969.8 400.6 L970.2 400.4 L970.7 400.6 L971.1 400.3 L971.6 400.5 L972.0 400.5 L972.5 400.5 L972.9 400.4 L973.4 400.5 L973.8 400.4 L974.3 400.3 L974.7 400.4 L975.2 400.4 L975.6 400.4 L976.1 400.4 L976.5 400.5 L977.0 400.6 L977.5 400.5 L977.9 400.5 L978.4 400.6 L978.8 400.6 L979.3 400.6 L979.7 400.6 L980.2 400.5 L980.6 400.5 L981.1 400.6 L981.5 400.4 L982.0 400.5 L982.4 400.5 L982.9 400.5 L983.3 400.5 L983.8 400.6 L984.2 400.5 L984.7 400.6 L985.1 400.6 L985.6 400.6 L986.0 400.6 L986.5 400.4 L986.9 400.4 L987.4 400.4 L987.8 400.5 L988.3 400.7 L988.7 400.4 L989.2 400.5 L989.6 400.4 L990.1 400.4 L990.5 400.5 L991.0 400.6 L991.4 400.5 L991.9 400.6 L992.3 400.4 L992.8 400.6 L993.2 400.6 L993.7 400.5 L994.1 400.5 L994.6 400.4 L995.0 400.4 L995.5 400.5 L995.9 400.4 L996.4 400.8 L996.8 400.5 L997.3 400.7 L997.7 400.5 L998.2 400.5 L998.6 400.6 L999.1 400.4 L999.5 400.6 L1000.0 400.5 L1000.4 400.3 L1000.9 400.6 L1001.3 400.6 L1001.8 400.5 L1002.2 400.7 L1002.7 400.5 L1003.1 400.6 L1003.6 400.6 L1004.0 400.4 L1004.5 400.6 L1004.9 400.4 L1005.4 400.4 L1005.8 400.6 L1006.3 400.4 L1006.7 400.5 L1007.2 400.3 L1007.6 400.5 L1008.1 400.4 L1008.5 400.5 L1009.0 400.3 L1009.5 400.5 L1009.9 400.5 L1010.4 400.5 L1010.8 400.5 L1011.3 400.5 L1011.7 400.4 L1012.2 400.2 L1012.6 400.5 L1013.1 400.4 L1013.5 400.5 L1014.0 400.5 L1014.4 400.3 L1014.9 400.4 L1015.3 400.4 L1015.8 400.4 L1016.2 400.5 L1016.7 400.5 L1017.1 400.4 L1017.6 400.4 L1018.0 400.6 L1018.5 400.4 L1018.9 400.6 L1019.4 400.5 L1019.8 400.3 L1020.3 400.4 L1020.7 400.5 L1021.2 400.5 L1021.6 400.6 L1022.1 400.6 L1022.5 400.6 L1023.0 400.5 L1023.4 400.5 L1023.9 400.6 L1024.3 400.5 L1024.8 400.6 L1025.2 400.3 L1025.7 400.6 L1026.1 400.5 L1026.6 400.3 L1027.0 400.6 L1027.5 400.5 L1027.9 400.5 L1028.4 400.4 L1028.8 400.5 L1029.3 400.7 L1029.7 400.4 L1030.2 400.2 L1030.6 400.4 L1031.1 400.4 L1031.5 400.5 L1032.0 400.5 L1032.4 400.4 L1032.9 400.4 L1033.3 400.6 L1033.8 400.4 L1034.2 400.7 L1034.7 400.4 L1035.1 400.4 L1035.6 400.6 L1036.0 400.6 L1036.5 400.4 L1036.9 400.6 L1037.4 400.3 L1037.8 400.4 L1038.3 400.6 L1038.7 400.5 L1039.2 400.4 L1039.6 400.6 L1040.1 400.6 L1040.5 400.5 L1041.0 400.3 L1041.5 399.3 L1042.0 398.3 L1042.5 397.2 L1043.0 396.0 L1043.5 404.4 L1043.9 403.6 L1044.4 411.1 L1044.9 410.2 L1045.3 418.3 L1045.8 420.6 L1046.5 395.0 L1047.0 391.1 L1047.5 387.6 L1048.0 388.0 L1048.5 389.1 L1048.9 388.5 L1049.4 392.0 L1050.0 381.8 L1050.3 463.0 L1051.0 400.0 L1051.4 440.0 L1052.0 396.0 L1052.5 427.7 L1053.0 448.7 L1053.6 474.3 L1054.0 456.7 L1054.5 440.0 L1055.2 470.0 L1055.8 475.9 L1056.4 482.9 L1057.0 499.4 L1057.5 499.6 L1058.0 514.4 L1058.6 519.3 L1059.1 504.8 L1059.6 488.6 L1060.2 500.3 L1060.7 507.0 L1061.3 510.3 L1062.0 517.0 L1062.5 511.0 L1063.1 508.5 L1063.6 505.7 L1064.1 513.5 L1064.6 520.0 L1065.2 507.6 L1065.7 493.6 L1066.2 501.2 L1066.6 508.8 L1067.1 514.3 L1067.6 516.0 L1068.1 502.9 L1068.5 512.3 L1069.0 521.0 L1069.5 508.5 L1070.0 497.0 L1070.5 493.9 L1071.0 499.0 L1071.6 496.8 L1072.1 492.9 L1072.6 489.2 L1073.1 488.6 L1073.6 482.9 L1074.1 475.6 L1074.7 467.8 L1075.2 470.9 L1075.7 461.4 L1076.2 454.7 L1076.6 452.6 L1077.1 447.0 L1077.6 441.2 L1078.1 433.4 L1078.7 435.2 L1079.2 430.7 L1079.7 425.4 L1080.2 423.0 L1080.7 416.8 L1081.1 419.1 L1081.6 415.6 L1082.0 415.6 L1082.5 411.2 L1082.9 409.7 L1083.4 408.0 L1083.9 411.2 L1084.4 416.4 L1084.8 418.8 L1085.3 425.1 L1085.8 427.7 L1086.3 425.1 L1086.9 423.0 L1087.4 419.8 L1087.9 439.1 L1088.5 438.3 L1089.0 448.4 L1089.5 445.8 L1090.1 436.7 L1090.6 427.7 L1091.1 421.0 L1091.5 421.0 L1092.0 416.0 L1092.4 417.7 L1092.9 411.9 L1093.4 407.1 L1094.0 406.4 L1094.5 400.0 L1095.0 398.0 L1095.4 388.8 L1095.9 384.9 L1096.3 382.5 L1096.8 381.3 L1097.2 370.4 L1097.7 367.5 L1098.5 346.9 L1099.0 345.6 L1099.4 343.7 L1099.9 342.0 L1100.3 344.9 L1100.8 343.6 L1101.2 341.5 L1101.7 341.3 L1102.2 339.6 L1102.7 337.8 L1103.2 338.3 L1103.8 339.6 L1104.3 336.8 L1104.8 336.5 L1105.3 341.5 L1105.8 345.3 L1106.2 341.5 L1106.7 350.7 L1107.2 350.0 L1108.0 372.0 L1108.5 375.4 L1108.9 369.0 L1109.4 381.6 L1109.8 382.2 L1110.3 377.4 L1110.7 391.5 L1111.2 385.0 L1111.7 393.3 L1112.1 388.6 L1112.6 388.7 L1113.0 399.3 L1113.5 388.2 L1113.9 397.8 L1114.4 392.9 L1114.9 387.1 L1115.4 391.1 L1115.9 383.7 L1116.5 398.9 L1117.0 398.6 L1117.5 392.2 L1118.0 397.0 L1118.5 399.0 L1118.9 399.4 L1119.4 402.1 L1119.9 394.1 L1120.3 392.4 L1120.8 401.3 L1121.3 396.7 L1121.7 397.6 L1122.2 392.0 L1122.7 403.0 L1123.1 400.1 L1123.6 400.0 L1124.1 393.9 L1124.5 393.8 L1125.0 399.0 L1125.5 392.0 L1125.9 397.0 L1126.4 399.2 L1126.9 400.1 L1127.3 399.9 L1127.8 401.3 L1128.2 398.5 L1128.7 398.0 L1129.2 394.6 L1129.6 401.2 L1130.1 400.4 L1130.6 398.9 L1131.0 400.7 L1131.5 397.6 L1132.0 398.6 L1132.4 397.9 L1132.9 400.3 L1133.4 399.3 L1133.8 400.2 L1134.3 400.6 L1134.8 399.7 L1135.2 399.1 L1135.7 399.3 L1136.1 408.5 L1136.6 400.6 L1137.1 401.8 L1137.5 401.2 L1138.0 401.4 L1138.5 401.2 L1138.9 400.4 L1139.4 400.5 L1139.8 398.9 L1140.3 398.8 L1140.7 401.9 L1141.2 400.8 L1141.6 398.6 L1142.1 399.2 L1142.5 399.0 L1143.0 400.9 L1143.4 398.7 L1143.9 401.2 L1144.3 402.2 L1144.8 399.6 L1145.2 400.2 L1145.7 401.8 L1146.2 400.8 L1146.6 399.9 L1147.1 398.4 L1147.5 399.9 L1148.0 400.5 L1148.4 401.8 L1148.9 401.2 L1149.3 400.7 L1149.8 399.9 L1150.2 403.5 L1150.7 398.8 L1151.1 399.8 L1151.6 400.9 L1152.0 399.7 L1152.5 400.9 L1152.9 401.5 L1153.4 398.6 L1153.8 399.3 L1154.3 401.0 L1154.8 401.3 L1155.2 401.0 L1155.7 402.2 L1156.1 399.4 L1156.6 395.9 L1157.0 399.9 L1157.5 399.3 L1157.9 401.6 L1158.4 400.2 L1158.8 403.9 L1159.3 401.1 L1159.7 400.6 L1160.2 398.5 L1160.6 397.9 L1161.1 402.0 L1161.5 401.6 L1162.0 401.5 L1162.8 411.5 L1163.5 398.9 L1164.0 400.1 L1164.4 398.9 L1164.9 399.9 L1165.3 396.6 L1165.8 399.7 L1166.3 401.0 L1166.7 396.9 L1167.2 399.3 L1167.6 404.3 L1168.1 400.3 L1168.6 399.4 L1169.0 401.4 L1169.5 400.7 L1169.9 399.7 L1170.4 399.2 L1170.9 399.6 L1171.3 399.8 L1171.8 398.1 L1172.2 402.6 L1172.7 398.3 L1173.2 402.5 L1173.6 404.0 L1174.1 398.6 L1174.5 396.4 L1175.0 400.0 L1175.5 385.1 L1176.0 395.6 L1176.5 395.5 L1177.0 391.1 L1177.6 391.0 L1178.1 391.8 L1178.7 383.1 L1178.9 419.5 L1179.5 409.1 L1180.0 393.5 L1180.5 407.4 L1181.0 411.5 L1181.5 401.5 L1182.0 402.6 L1182.5 398.8 L1183.0 387.9 L1183.5 404.6 L1184.0 404.2 L1184.5 394.7 L1185.0 401.8 L1185.5 393.4 L1186.0 402.1 L1186.5 403.1 L1187.0 399.9 L1187.5 400.4 L1188.0 398.3 L1188.5 402.0 L1189.0 404.6 L1189.5 385.0 L1190.0 402.0 L1190.5 409.8 L1190.9 406.0 L1191.4 403.5 L1191.8 407.2 L1192.3 399.4 L1192.8 395.2 L1193.2 404.9 L1193.7 407.0 L1194.2 407.7 L1194.7 404.2 L1195.2 406.8 L1195.6 411.8 L1196.1 407.1 L1196.6 406.4 L1197.1 405.1 L1197.6 408.4 L1198.1 408.1 L1198.5 409.4 L1199.0 411.7 L1199.5 409.1 L1200.0 409.5 L1200.5 410.0 L1200.9 416.7 L1201.4 408.5 L1201.9 408.8 L1202.3 408.4 L1202.8 413.0 L1203.3 406.2 L1203.7 409.9 L1204.2 411.1 L1204.7 411.7 L1205.1 414.6 L1205.6 412.7 L1205.9 391.0 L1206.4 392.1 L1207.0 394.1 L1207.5 394.1 L1208.0 396.0 L1208.5 398.7 L1208.9 393.8 L1209.4 392.8 L1209.8 388.5 L1210.3 389.1 L1210.7 385.7 L1211.2 385.0 L1211.7 390.1 L1212.3 396.9 L1212.8 404.0 L1213.3 411.3 L1213.9 419.1 L1214.4 427.7 L1214.9 426.6 L1215.4 425.8 L1216.0 419.0 L1216.5 417.5 L1217.0 420.5 L1217.5 415.0 L1218.0 415.5 L1218.6 427.1 L1219.1 434.0 L1219.6 430.4 L1220.0 422.9 L1220.5 422.1 L1221.0 418.0 L1221.5 427.6 L1222.0 427.3 L1222.5 434.3 L1223.0 435.7 L1223.5 439.2 L1224.0 441.6 L1224.5 443.6 L1225.0 445.2 L1225.5 415.0 L1226.0 416.7 L1226.5 413.5 L1226.9 406.8 L1227.4 405.9 L1227.9 405.5 L1228.4 405.8 L1228.9 413.1 L1229.4 411.9 L1229.9 410.7 L1230.4 404.8 L1230.8 409.7 L1231.3 405.2 L1231.8 404.0 L1232.3 399.8 L1232.9 392.2 L1233.4 391.3 L1233.9 390.0 L1234.3 389.3 L1234.8 388.9 L1235.2 376.6 L1235.7 382.2 L1236.1 382.5 L1236.6 378.6 L1237.1 376.8 L1237.6 376.3 L1238.0 371.3 L1238.5 373.1 L1239.0 373.8 L1239.5 371.8 L1239.9 376.3 L1240.4 375.5 L1240.8 379.3 L1241.3 380.0 L1241.8 380.8 L1242.2 381.0 L1242.7 383.3 L1243.1 383.1 L1243.6 389.5 L1244.0 382.9 L1244.5 386.5 L1245.0 380.1 L1245.6 375.6 L1246.1 367.5 L1246.6 363.3 L1247.2 360.6 L1247.7 351.6 L1248.2 352.9 L1248.6 350.9 L1249.1 353.7 L1249.5 346.8 L1250.0 350.0 L1250.5 351.1 L1250.9 348.9 L1251.3 352.0 L1251.8 350.3 L1252.2 348.6 L1252.7 352.7 L1253.2 353.7 L1253.6 350.9 L1254.0 354.6 L1254.5 357.2 L1255.0 354.4 L1255.4 356.7 L1255.9 353.2 L1256.3 355.3 L1256.8 348.2 L1257.2 354.8 L1257.7 360.7 L1258.1 351.4 L1258.6 360.0 L1259.0 360.9 L1259.5 362.7 L1259.9 364.7 L1260.4 365.9 L1260.9 366.6 L1261.3 367.6 L1261.8 366.4 L1262.2 366.4 L1262.7 368.7 L1263.1 368.4 L1263.6 369.0 L1264.1 365.5 L1264.6 362.3 L1265.2 366.8 L1265.7 370.5 L1266.2 364.1 L1266.7 364.3 L1267.2 370.1 L1267.7 368.5 L1268.1 367.4 L1268.6 367.3 L1269.1 368.6 L1269.6 366.3 L1270.1 369.1 L1270.5 373.3 L1271.0 368.9 L1271.5 372.3 L1272.0 368.0 L1272.4 377.5 L1272.9 374.5 L1273.3 366.7 L1273.8 374.5 L1274.2 377.2 L1274.7 380.0 L1275.2 380.5 L1275.6 387.2 L1276.1 388.8 L1276.5 391.1 L1277.0 389.7 L1277.4 397.0 L1278.2 411.9 L1278.7 417.7 L1279.3 419.4 L1279.8 426.0 L1280.3 422.4 L1280.8 416.0 L1281.3 411.5 L1281.8 415.0 L1282.3 413.3 L1282.8 419.7 L1283.2 420.0 L1283.7 424.6 L1284.2 434.2 L1284.8 449.5 L1285.3 462.7 L1286.0 442.0 L1286.5 441.9 L1287.0 443.8 L1287.5 447.3 L1288.0 454.7 L1288.5 451.6 L1289.0 460.9 L1289.6 475.4 L1290.1 474.8 L1290.6 477.4 L1291.0 473.4 L1291.5 475.0 L1292.0 472.5 L1292.5 473.8 L1293.0 471.9 L1293.5 477.2 L1294.0 477.7 L1294.5 478.3 L1295.0 477.5 L1295.4 478.7 L1295.9 477.3 L1296.4 478.5 L1296.9 476.0 L1297.5 471.3 L1298.0 465.8 L1298.5 463.6 L1299.0 463.6 L1299.4 461.2 L1299.9 458.4 L1300.4 459.5 L1300.9 457.4 L1301.4 453.8 L1301.8 451.2 L1302.3 450.4 L1302.8 448.4 L1303.3 445.5 L1303.8 443.6 L1304.2 442.1 L1304.7 438.8 L1305.2 435.7 L1305.7 432.7 L1306.1 425.0 L1306.6 425.6 L1307.0 423.2 L1307.5 424.6 L1308.0 423.3 L1308.5 420.6 L1309.0 415.7 L1309.5 411.2 L1310.0 408.7 L1310.5 409.1 L1310.9 403.5 L1311.4 404.8 L1311.8 403.3 L1312.3 399.2 L1312.8 395.7 L1313.4 375.0 L1313.9 371.4 L1314.4 366.4 L1315.0 359.0 L1315.5 353.5 L1316.1 348.9 L1316.6 346.0 L1317.1 342.2 L1317.5 339.0 L1318.0 340.2 L1318.5 333.7 L1318.9 334.2 L1319.4 331.7 L1319.9 322.2 L1320.4 323.8 L1320.8 319.0 L1321.3 322.4 L1321.8 315.0 L1322.3 310.9 L1322.8 303.3 L1323.2 307.4 L1323.7 301.3 L1324.2 304.8 L1324.7 301.8 L1325.3 307.4 L1325.8 302.4 L1326.3 306.8 L1326.9 316.2 L1327.4 315.9 L1327.9 318.7 L1328.4 317.6 L1328.8 318.6 L1329.3 324.2 L1329.8 320.6 L1330.3 326.3 L1330.8 333.7 L1331.3 339.7 L1331.9 346.5 L1332.4 346.0 L1333.0 355.6 L1333.5 364.6 L1334.0 369.2 L1334.5 374.6 L1335.3 402.3 L1336.0 424.6 L1336.6 422.6 L1337.1 426.9 L1337.7 427.7 L1338.5 451.6 L1339.0 447.3 L1339.5 441.9 L1340.0 434.0 L1340.5 452.5 L1340.9 465.8 L1341.4 470.3 L1342.0 477.7 L1342.5 484.9 L1342.9 501.4 L1343.5 501.2 L1344.1 506.4 L1344.7 503.6 L1345.3 497.2 L1345.8 502.7 L1346.4 500.0 L1347.0 500.1 L1347.5 498.1 L1348.0 492.9 L1348.6 491.4 L1349.1 495.4 L1349.7 499.7 L1350.2 493.4 L1350.7 498.6 L1351.2 496.1 L1351.8 494.7 L1352.4 495.4 L1352.9 488.6 L1353.5 495.6 L1354.1 497.9 L1354.7 500.7 L1355.2 485.8 L1355.7 482.0 L1356.2 484.8 L1356.8 493.1 L1357.4 497.8 L1357.9 494.3 L1358.4 491.5 L1358.8 485.1 L1359.3 482.9 L1359.8 478.8 L1360.2 479.8 L1360.7 474.3 L1361.2 468.7 L1361.8 471.1 L1362.4 465.1 L1362.9 460.0 L1363.4 453.3 L1363.8 453.6 L1364.3 447.0 L1364.8 433.2 L1365.3 416.6 L1365.8 399.2 L1366.3 455.0 L1366.7 405.0 L1367.0 459.5 L1367.4 410.0 L1367.8 462.0 L1368.2 415.0 L1368.9 478.6 L1369.3 412.0 L1369.8 460.0 L1370.2 419.8 L1370.7 455.0 L1371.2 425.0 L1371.8 448.4 L1372.3 451.4 L1372.8 454.3 L1373.2 465.6 L1373.7 458.8 L1374.2 465.8 L1374.7 466.5 L1375.2 470.4 L1375.6 470.6 L1376.1 470.5 L1376.6 472.2 L1377.1 463.2 L1377.5 468.6 L1378.0 465.0 L1378.5 472.5 L1379.0 491.4 L1379.5 478.3 L1380.0 489.3 L1380.6 450.0 L1381.1 433.8 L1381.5 424.2 L1382.0 411.9 L1382.6 427.2 L1383.1 443.7 L1383.7 459.5 L1384.2 472.8 L1384.7 478.6 L1385.6 396.0 L1386.0 355.6 L1386.5 400.0 L1387.0 272.0 L1387.6 395.0 L1388.0 355.2 L1388.5 315.9 L1389.2 410.0 L1390.0 305.0 L1390.8 400.0 L1391.6 330.0 L1392.0 315.3 L1392.5 319.0 L1393.3 400.8 L1393.8 421.6 L1394.2 444.3 L1394.7 467.0 L1395.3 432.7 L1396.0 402.0 L1396.5 417.3 L1397.0 433.2 L1397.6 452.5 L1398.1 467.0 L1398.8 443.6 L1399.3 416.9 L1399.9 389.7 L1400.4 355.6 L1401.2 338.0 L1401.6 372.0 L1402.0 323.8 L1402.6 336.2 L1403.2 345.0 L1404.0 312.0 L1404.6 352.0 L1405.2 303.0 L1406.0 345.0 L1406.7 331.7 L1407.3 372.0 L1407.8 368.0 L1408.3 363.5 L1408.9 378.8 L1409.4 394.6 L1410.0 411.9 L1410.6 425.3 L1411.2 436.6 L1411.8 453.0 L1412.4 404.0 L1413.0 356.3 L1413.5 372.9 L1413.9 392.0 L1414.7 495.0 L1415.0 501.4 L1415.5 398.4 L1416.0 400.5 L1416.5 400.5 L1416.9 400.5 L1417.4 400.7 L1417.8 400.3 L1418.3 400.5 L1418.7 400.7 L1419.2 400.5 L1419.6 400.3 L1420.1 400.5 L1420.5 400.4 L1421.0 400.4 L1421.4 400.5 L1421.9 400.7 L1422.3 400.5 L1422.8 400.6 L1423.2 400.6 L1423.7 400.5 L1424.1 400.4 L1424.6 400.5 L1425.0 400.5 L1425.5 400.5 L1425.9 400.4 L1426.4 400.5 L1426.8 400.4 L1427.3 400.4 L1427.7 400.5 L1428.2 400.5 L1428.6 400.5 L1429.1 400.6 L1429.5 400.5 L1430.0 400.5 L1430.4 400.4 L1430.9 400.4 L1431.3 400.5 L1431.8 400.4 L1432.2 400.5 L1432.7 400.4 L1433.1 400.5 L1433.6 400.5 L1434.0 400.6 L1434.5 400.5 L1434.9 400.5 L1435.4 400.5 L1435.8 400.5 L1436.3 400.7 L1436.8 400.5 L1437.2 400.4 L1437.7 400.5 L1438.1 400.5 L1438.6 400.5 L1439.0 400.6 L1439.5 400.4 L1439.9 400.7 L1440.4 400.7 L1440.8 400.5 L1441.3 400.4 L1441.7 400.5 L1442.2 400.5 L1442.6 400.3 L1443.1 400.5 L1443.5 400.4 L1444.0 400.5 L1444.4 400.6 L1444.9 400.6 L1445.3 400.4 L1445.8 400.6 L1446.2 400.6 L1446.7 400.5 L1447.1 400.5 L1447.6 400.6 L1448.0 400.5 L1448.5 400.5 L1448.9 400.4 L1449.4 400.6 L1449.8 400.3 L1450.3 400.6 L1450.7 400.4 L1451.2 400.6 L1451.6 400.3 L1452.1 400.4 L1452.5 400.4 L1453.0 400.6 L1453.4 400.3 L1453.9 400.6 L1454.3 400.4 L1454.8 400.6 L1455.2 400.5 L1455.7 400.5 L1456.2 400.5 L1456.6 400.7 L1457.1 400.5 L1457.5 400.5 L1458.0 400.7 L1458.4 400.5 L1458.9 400.6 L1459.3 400.4 L1459.8 400.5 L1460.2 400.3 L1460.7 400.5 L1461.1 400.4 L1461.6 400.4 L1462.0 400.4 L1462.5 400.6 L1462.9 400.5 L1463.4 400.4 L1463.8 400.7 L1464.3 400.4 L1464.7 400.5 L1465.2 400.5 L1465.6 400.4 L1466.1 400.3 L1466.5 400.4 L1467.0 400.6 L1467.4 400.6 L1467.9 400.3 L1468.3 400.6 L1468.8 400.5 L1469.2 400.5 L1469.7 400.5 L1470.1 400.5 L1470.6 400.4 L1471.0 400.4 L1471.5 400.4 L1471.9 400.5 L1472.4 400.6 L1472.8 400.4 L1473.3 400.7 L1473.7 400.4 L1474.2 400.4 L1474.6 400.6 L1475.1 400.5 L1475.5 400.5 L1476.0 400.4 L1476.5 400.4 L1476.9 400.3 L1477.4 400.6 L1477.8 400.6 L1478.3 400.7 L1478.7 400.5 L1479.2 400.5 L1479.6 400.6 L1480.1 400.6 L1480.5 400.5 L1481.0 400.5 L1481.4 400.7 L1481.9 400.3 L1482.3 400.4 L1482.8 400.4 L1483.2 400.6 L1483.7 400.6 L1484.1 400.5 L1484.6 400.6 L1485.0 400.5 L1485.5 400.5 L1485.9 400.4 L1486.4 400.5 L1486.8 400.5 L1487.3 400.6 L1487.7 400.7 L1488.2 400.3 L1488.6 400.6 L1489.1 400.5 L1489.5 400.6 L1490.0 400.6 L1490.4 400.6 L1490.9 400.6 L1491.3 400.4 L1491.8 400.3 L1492.2 400.7 L1492.7 400.6 L1493.1 400.4 L1493.6 400.6 L1494.0 400.6 L1494.5 400.3 L1494.9 400.6 L1495.4 400.4 L1495.8 400.6 L1496.3 400.4 L1496.8 400.4 L1497.2 400.4 L1497.7 400.5 L1498.1 400.6 L1498.6 400.4 L1499.0 400.3 L1499.5 400.7 L1499.9 400.7 L1500.4 400.6 L1500.8 400.4 L1501.3 400.4 L1501.7 400.3 L1502.2 400.6 L1502.6 400.6 L1503.1 400.4 L1503.5 400.5 L1504.0 400.5 L1504.4 400.5 L1504.9 400.5 L1505.3 400.7 L1505.8 400.4 L1506.2 400.6 L1506.7 400.6 L1507.1 400.5 L1507.6 400.5 L1508.0 400.4 L1508.5 400.6 L1508.9 400.4 L1509.4 400.4 L1509.8 400.5 L1510.3 400.4 L1510.7 400.4 L1511.2 400.5 L1511.6 400.6 L1512.1 400.5 L1512.5 400.6 L1513.0 400.4 L1513.4 400.3 L1513.9 400.7 L1514.3 400.5 L1514.8 400.4 L1515.2 400.5 L1515.7 400.6 L1516.2 400.3 L1516.6 400.4 L1517.1 400.5 L1517.5 400.4 L1518.0 400.6 L1518.4 400.6 L1518.9 400.5 L1519.3 400.5 L1519.8 400.5 L1520.2 400.4 L1520.7 400.5 L1521.1 400.5 L1521.6 400.5 L1522.0 400.6 L1522.5 400.8 L1522.9 400.4 L1523.4 400.5 L1523.8 400.6 L1524.3 400.6 L1524.7 400.5 L1525.2 400.5 L1525.6 400.6 L1526.1 400.6 L1526.5 400.5 L1527.0 400.4 L1527.4 400.6 L1527.9 400.6 L1528.3 400.5 L1528.8 400.6 L1529.2 400.7 L1529.7 400.3 L1530.1 400.6 L1530.6 400.4 L1531.0 400.4 L1531.5 400.5 L1531.9 400.6 L1532.4 400.5 L1532.8 400.4 L1533.3 400.4 L1533.7 400.4 L1534.2 400.5 L1534.6 400.4 L1535.1 400.4 L1535.5 400.7 L1536.0 400.5" stroke="#ff0000"/>
<path d="M913.0 271.9 L913.5 272.0 L913.9 271.9 L914.4 271.9 L914.8 272.0 L915.3 272.0 L915.7 272.1 L916.2 271.9 L916.6 271.9 L917.1 272.2 L917.5 272.0 L918.0 272.1 L918.4 272.1 L918.9 272.1 L919.3 272.0 L919.8 271.8 L920.2 271.8 L920.7 272.1 L921.1 272.1 L921.6 272.1 L922.0 271.8 L922.5 271.8 L922.9 271.9 L923.4 271.9 L923.8 272.0 L924.3 271.9 L924.7 272.2 L925.2 271.9 L925.6 271.9 L926.1 272.1 L926.5 272.0 L927.0 271.9 L927.4 272.1 L927.9 272.2 L928.3 271.9 L928.8 272.0 L929.2 271.9 L929.7 271.8 L930.1 272.1 L930.6 272.1 L931.0 272.1 L931.5 272.0 L931.9 271.8 L932.4 272.0 L932.8 271.9 L933.3 271.9 L933.7 271.9 L934.2 272.1 L934.6 272.0 L935.1 272.2 L935.5 272.0 L936.0 271.8 L936.4 272.1 L936.9 272.1 L937.3 272.0 L937.8 271.9 L938.2 272.2 L938.7 271.9 L939.1 272.0 L939.6 271.8 L940.0 271.9 L940.5 271.8 L940.9 272.1 L941.4 272.1 L941.8 272.0 L942.3 271.9 L942.7 272.0 L943.2 272.0 L943.6 271.9 L944.1 271.9 L944.5 272.0 L945.0 272.1 L945.4 272.0 L945.9 272.0 L946.3 271.9 L946.8 271.8 L947.2 272.0 L947.7 271.9 L948.1 272.0 L948.6 272.0 L949.0 272.0 L949.5 271.9 L949.9 272.1 L950.4 272.0 L950.8 272.1 L951.3 272.1 L951.7 272.1 L952.2 272.0 L952.6 271.8 L953.1 271.9 L953.5 272.2 L954.0 272.0 L954.4 272.1 L954.9 272.0 L955.3 271.9 L955.8 271.9 L956.2 271.9 L956.7 272.1 L957.1 272.0 L957.6 272.2 L958.0 272.0 L958.5 272.2 L958.9 272.0 L959.4 271.9 L959.8 272.2 L960.3 272.0 L960.7 272.1 L961.2 272.0 L961.6 272.0 L962.1 272.0 L962.5 271.9 L963.0 271.9 L963.4 271.9 L963.9 271.9 L964.3 271.9 L964.8 272.0 L965.2 272.0 L965.7 272.2 L966.1 272.2 L966.6 272.0 L967.0 272.1 L967.5 272.0 L967.9 272.0 L968.4 272.0 L968.8 271.9 L969.3 272.0 L969.7 271.9 L970.2 272.0 L970.6 272.0 L971.1 271.9 L971.5 272.0 L972.0 272.1 L972.4 271.9 L972.9 272.0 L973.3 272.1 L973.8 272.2 L974.2 271.9 L974.7 272.0 L975.1 272.1 L975.6 272.1 L976.0 272.0 L976.5 272.1 L976.9 271.9 L977.4 271.9 L977.8 272.2 L978.3 272.0 L978.7 272.2 L979.2 271.9 L979.6 272.0 L980.1 271.8 L980.5 272.1 L981.0 272.0 L981.4 272.2 L981.9 272.0 L982.3 272.0 L982.8 271.9 L983.2 272.0 L983.7 272.1 L984.1 272.1 L984.6 272.1 L985.0 272.1 L985.5 272.0 L985.9 272.1 L986.4 272.0 L986.8 271.9 L987.3 272.2 L987.7 272.0 L988.2 271.9 L988.6 272.0 L989.1 272.0 L989.5 272.1 L990.0 272.1 L990.4 271.7 L990.9 272.1 L991.3 272.2 L991.8 271.9 L992.2 271.8 L992.7 272.0 L993.1 272.0 L993.6 272.0 L994.0 271.9 L994.5 272.0 L994.9 272.0 L995.4 272.1 L995.8 272.2 L996.3 272.0 L996.7 271.9 L997.2 271.8 L997.6 272.1 L998.1 272.0 L998.5 272.0 L999.0 271.9 L999.4 272.1 L999.9 271.8 L1000.3 272.0 L1000.8 272.0 L1001.2 272.0 L1001.7 272.1 L1002.1 272.0 L1002.6 272.0 L1003.0 272.1 L1003.5 271.8 L1003.9 272.0 L1004.4 272.0 L1004.8 272.1 L1005.3 271.9 L1005.7 272.1 L1006.2 272.0 L1006.6 271.9 L1007.1 271.9 L1007.5 271.9 L1008.0 272.0 L1008.4 272.0 L1008.9 272.1 L1009.3 272.1 L1009.8 271.9 L1010.2 272.1 L1010.7 272.1 L1011.1 272.0 L1011.6 272.0 L1012.0 271.9 L1012.5 272.0 L1012.9 271.9 L1013.4 271.9 L1013.8 272.0 L1014.3 272.0 L1014.7 272.0 L1015.2 272.0 L1015.6 271.9 L1016.1 272.0 L1016.5 271.9 L1017.0 271.9 L1017.4 272.0 L1017.9 272.1 L1018.3 272.0 L1018.8 271.9 L1019.2 272.1 L1019.7 272.2 L1020.1 272.0 L1020.6 272.0 L1021.0 272.0 L1021.5 272.3 L1021.9 272.0 L1022.4 272.1 L1022.8 272.0 L1023.3 271.8 L1023.7 271.9 L1024.2 271.9 L1024.6 272.0 L1025.1 272.0 L1025.5 272.2 L1026.0 272.0 L1026.4 272.0 L1026.9 272.0 L1027.3 272.0 L1027.8 272.2 L1028.2 272.0 L1028.7 272.1 L1029.1 272.1 L1029.6 271.9 L1030.0 272.1 L1030.5 272.0 L1030.9 272.0 L1031.4 272.0 L1031.8 272.0 L1032.3 272.0 L1032.7 272.2 L1033.2 272.0 L1033.6 272.1 L1034.1 272.2 L1034.5 272.1 L1035.0 272.1 L1035.4 272.1 L1035.9 272.1 L1036.3 272.2 L1036.8 271.9 L1037.2 272.2 L1037.7 272.0 L1038.1 271.8 L1038.6 271.9 L1039.0 271.9 L1039.5 272.0 L1039.9 271.9 L1040.4 271.9 L1040.8 272.0 L1041.3 272.0 L1041.7 271.9 L1042.2 272.0 L1042.6 272.0 L1043.1 272.2 L1043.5 276.8 L1044.0 272.0 L1044.6 267.7 L1045.2 262.0 L1045.6 283.0 L1045.9 250.0 L1046.2 281.8 L1046.6 256.0 L1047.0 284.0 L1047.4 262.0 L1047.8 283.0 L1048.2 258.0 L1048.6 285.0 L1049.0 262.0 L1049.4 285.0 L1049.8 250.0 L1050.2 210.3 L1050.6 299.0 L1051.0 246.0 L1051.4 288.0 L1051.8 240.0 L1052.2 286.0 L1052.6 248.0 L1053.0 290.0 L1053.4 250.0 L1053.8 253.0 L1054.2 292.0 L1054.6 262.0 L1055.0 296.0 L1055.4 270.0 L1055.8 300.0 L1056.2 293.0 L1056.7 299.4 L1057.3 302.9 L1057.8 304.0 L1058.3 327.5 L1058.8 340.0 L1059.6 407.0 L1060.1 398.4 L1060.5 384.2 L1061.0 367.5 L1061.5 372.8 L1062.0 375.4 L1062.5 377.8 L1062.9 381.3 L1063.4 385.0 L1063.9 386.1 L1064.4 388.0 L1064.9 385.2 L1065.3 379.8 L1065.8 377.8 L1066.2 373.9 L1066.7 374.0 L1067.2 368.4 L1067.6 369.3 L1068.1 358.9 L1068.6 365.1 L1069.1 358.8 L1069.5 356.0 L1070.0 351.6 L1070.5 345.2 L1071.0 340.5 L1071.5 333.9 L1072.0 330.0 L1072.5 326.3 L1073.0 320.0 L1073.5 311.2 L1073.9 304.4 L1074.4 304.0 L1075.2 289.7 L1075.7 293.4 L1076.2 288.3 L1076.6 287.3 L1077.1 287.4 L1077.6 286.5 L1078.1 284.9 L1078.6 278.1 L1079.1 279.1 L1079.6 268.9 L1080.1 269.2 L1080.6 262.5 L1081.1 254.3 L1081.6 257.2 L1082.1 258.0 L1082.5 260.0 L1083.0 261.7 L1083.4 270.1 L1083.9 268.3 L1084.3 273.5 L1084.8 273.8 L1085.3 280.0 L1085.8 282.4 L1086.3 287.6 L1086.9 293.1 L1087.4 294.7 L1087.9 299.0 L1088.5 294.7 L1089.0 299.0 L1089.5 296.3 L1090.0 286.3 L1090.6 282.6 L1091.1 272.3 L1091.6 272.1 L1092.0 270.4 L1092.5 273.1 L1092.9 275.2 L1093.4 276.5 L1093.8 277.3 L1094.3 277.0 L1094.8 273.7 L1095.3 270.1 L1095.8 271.4 L1096.3 268.4 L1096.8 264.4 L1097.3 264.3 L1097.8 261.0 L1098.3 257.2 L1099.0 314.0 L1099.5 309.0 L1100.1 308.6 L1100.6 304.0 L1101.2 303.7 L1101.7 300.0 L1102.2 304.2 L1102.8 296.1 L1103.3 294.1 L1103.8 296.0 L1104.3 294.2 L1104.8 291.9 L1105.2 286.5 L1105.7 296.3 L1106.2 283.4 L1106.7 281.3 L1107.2 280.7 L1107.6 275.2 L1108.1 273.7 L1108.6 270.7 L1109.1 268.1 L1109.6 270.9 L1110.0 270.0 L1110.5 264.9 L1111.0 267.5 L1111.5 270.8 L1111.9 268.5 L1112.4 270.8 L1112.9 265.7 L1113.3 266.2 L1113.8 261.7 L1114.3 269.7 L1114.8 269.2 L1115.2 268.6 L1115.7 270.0 L1116.2 271.0 L1116.6 271.9 L1117.1 272.6 L1117.5 271.6 L1118.0 269.7 L1118.4 270.5 L1118.9 266.1 L1119.3 269.0 L1119.8 276.0 L1120.2 275.3 L1120.7 274.0 L1121.1 274.7 L1121.6 277.6 L1122.0 271.7 L1122.5 272.0 L1122.9 284.2 L1123.5 272.0 L1124.0 271.6 L1124.4 272.4 L1124.9 273.3 L1125.3 273.0 L1125.8 270.3 L1126.2 267.3 L1126.7 272.3 L1127.1 272.1 L1127.6 273.1 L1128.0 273.0 L1128.5 273.3 L1128.9 272.5 L1129.4 271.3 L1129.8 272.2 L1130.3 273.3 L1130.7 272.2 L1131.2 272.4 L1131.6 272.5 L1132.1 272.8 L1132.5 273.3 L1133.0 271.8 L1133.4 269.8 L1133.9 271.8 L1134.3 271.5 L1134.8 271.6 L1135.2 273.0 L1135.7 272.0 L1136.1 271.6 L1136.6 272.8 L1137.0 272.9 L1137.5 272.1 L1137.9 273.2 L1138.4 272.0 L1138.8 270.7 L1139.3 271.5 L1139.7 273.7 L1140.2 273.6 L1140.7 270.8 L1141.1 272.0 L1141.6 272.5 L1142.0 271.1 L1142.5 272.3 L1142.9 273.4 L1143.4 270.3 L1143.8 271.8 L1144.3 272.2 L1144.7 272.7 L1145.2 272.1 L1145.6 272.6 L1146.1 271.3 L1146.5 272.5 L1147.0 270.8 L1147.4 272.1 L1147.9 273.3 L1148.3 273.9 L1148.8 273.1 L1149.2 271.3 L1149.7 271.8 L1150.1 271.4 L1150.6 270.1 L1151.0 271.9 L1151.5 270.7 L1151.9 272.0 L1152.4 271.9 L1152.8 271.7 L1153.3 270.7 L1153.7 272.1 L1154.2 271.4 L1154.6 272.2 L1155.1 272.9 L1155.5 272.2 L1156.0 273.5 L1156.4 272.0 L1156.9 271.5 L1157.4 272.0 L1157.8 272.2 L1158.3 271.7 L1158.7 272.2 L1159.2 271.3 L1159.6 271.6 L1160.1 274.9 L1160.5 271.8 L1161.0 271.5 L1161.4 272.2 L1161.9 270.3 L1162.3 271.3 L1162.8 269.7 L1163.2 271.8 L1163.7 272.7 L1164.1 273.1 L1164.6 270.5 L1165.0 273.1 L1165.5 272.1 L1165.9 272.1 L1166.4 272.0 L1166.8 272.7 L1167.3 272.0 L1167.7 272.2 L1168.2 272.0 L1168.6 272.5 L1169.1 271.9 L1169.5 271.6 L1170.0 272.8 L1170.4 272.4 L1170.9 269.6 L1171.3 271.0 L1171.8 272.4 L1172.2 270.6 L1172.7 272.8 L1173.1 276.0 L1173.6 273.1 L1174.1 271.9 L1174.5 271.4 L1175.0 273.0 L1175.4 272.7 L1175.9 272.5 L1176.3 268.9 L1176.8 271.0 L1177.2 272.4 L1177.7 273.1 L1178.1 272.0 L1178.6 272.7 L1179.0 272.0 L1179.5 271.8 L1179.9 271.7 L1180.4 273.2 L1180.8 272.5 L1181.3 271.6 L1181.7 272.0 L1182.2 272.5 L1182.6 272.7 L1183.1 270.7 L1183.5 271.7 L1184.0 271.9 L1184.4 270.4 L1184.9 272.0 L1185.3 272.7 L1185.8 271.3 L1186.2 270.9 L1186.7 272.0 L1187.1 270.5 L1187.6 269.7 L1188.0 272.7 L1188.5 271.7 L1188.9 271.4 L1189.4 271.6 L1189.8 270.5 L1190.3 273.9 L1190.8 271.1 L1191.2 270.8 L1191.7 277.4 L1192.1 271.8 L1192.6 270.8 L1193.0 272.3 L1193.5 270.5 L1193.9 274.0 L1194.4 272.3 L1194.8 271.9 L1195.3 273.1 L1195.7 272.6 L1196.2 273.0 L1196.6 272.7 L1197.1 273.4 L1197.5 272.5 L1198.0 272.5 L1198.4 271.9 L1198.9 273.5 L1199.3 269.8 L1199.8 272.4 L1200.2 270.6 L1200.7 272.3 L1201.1 272.8 L1201.6 274.1 L1202.0 271.6 L1202.5 272.6 L1202.9 272.5 L1203.4 272.0 L1203.8 272.7 L1204.3 273.3 L1204.7 270.5 L1205.2 272.8 L1205.6 273.5 L1206.1 272.1 L1206.5 272.8 L1207.0 272.0 L1207.6 265.4 L1208.1 260.0 L1208.7 254.3 L1209.6 254.8 L1210.1 261.4 L1210.6 262.1 L1211.1 268.0 L1211.5 268.1 L1212.0 277.3 L1212.5 279.6 L1213.0 289.3 L1213.5 287.6 L1214.0 294.9 L1214.5 299.1 L1215.0 311.4 L1215.5 322.1 L1216.0 335.7 L1216.5 338.9 L1217.0 344.0 L1217.5 351.0 L1218.0 359.7 L1218.5 358.0 L1219.0 367.5 L1219.5 375.3 L1220.0 373.5 L1220.5 383.9 L1221.0 384.3 L1221.5 386.5 L1222.0 378.7 L1222.5 379.5 L1223.0 370.8 L1223.5 367.2 L1224.0 359.5 L1224.7 347.3 L1225.3 335.7 L1225.8 328.1 L1226.2 319.4 L1226.7 315.5 L1227.2 310.3 L1227.6 302.6 L1228.1 301.0 L1228.6 295.6 L1229.1 292.6 L1229.6 295.8 L1230.0 294.2 L1230.5 286.7 L1231.0 287.6 L1231.5 283.8 L1232.0 281.8 L1232.5 276.7 L1233.0 276.7 L1233.5 273.5 L1234.0 271.7 L1234.5 267.4 L1234.9 270.0 L1235.4 262.3 L1235.9 264.0 L1236.3 258.5 L1236.8 255.0 L1237.4 266.5 L1238.0 280.0 L1238.5 277.9 L1239.0 275.4 L1239.5 269.8 L1240.0 270.2 L1240.5 267.0 L1241.0 269.1 L1241.5 272.3 L1241.9 279.4 L1242.4 282.9 L1242.9 286.0 L1243.4 284.7 L1243.9 280.4 L1244.5 278.7 L1245.0 276.3 L1245.5 273.9 L1246.0 265.4 L1246.5 278.6 L1247.1 289.2 L1247.6 303.5 L1248.1 305.0 L1248.6 300.6 L1249.1 307.2 L1249.6 308.8 L1250.1 314.7 L1250.6 306.8 L1251.1 310.5 L1251.6 313.0 L1252.1 310.6 L1252.6 306.1 L1253.0 308.9 L1253.5 302.7 L1254.0 303.5 L1254.5 313.3 L1255.0 307.9 L1255.4 310.0 L1255.9 312.2 L1256.4 308.0 L1256.8 309.3 L1257.3 308.6 L1257.8 299.6 L1258.2 298.8 L1258.7 298.7 L1259.2 296.8 L1259.7 293.9 L1260.2 300.4 L1260.7 306.1 L1261.2 293.7 L1261.7 292.2 L1262.2 291.2 L1262.7 287.6 L1263.2 284.7 L1263.6 290.1 L1264.1 287.1 L1264.5 287.3 L1265.0 284.4 L1265.5 290.5 L1265.9 287.5 L1266.4 290.0 L1266.9 286.2 L1267.4 290.5 L1267.8 294.0 L1268.3 292.4 L1268.8 287.9 L1269.2 289.6 L1269.7 279.9 L1270.1 271.9 L1270.6 274.9 L1271.1 271.7 L1271.7 273.9 L1272.2 271.7 L1272.7 275.8 L1273.1 284.6 L1273.6 271.7 L1274.0 272.3 L1274.5 273.2 L1274.9 277.6 L1275.4 279.7 L1275.9 281.5 L1276.3 278.4 L1276.8 275.2 L1277.2 275.2 L1277.7 269.6 L1278.1 274.6 L1278.6 270.2 L1279.2 258.3 L1279.7 248.7 L1280.3 265.2 L1281.0 273.3 L1281.5 274.5 L1281.9 277.8 L1282.4 272.5 L1282.8 281.2 L1283.3 278.0 L1283.9 280.0 L1284.4 273.7 L1285.0 274.0 L1285.5 277.4 L1286.0 288.6 L1286.5 292.4 L1287.0 292.9 L1287.5 298.7 L1287.9 297.0 L1288.4 300.8 L1288.9 303.5 L1289.4 323.9 L1290.0 322.8 L1290.5 332.0 L1291.0 333.2 L1291.5 332.8 L1292.0 333.9 L1292.5 333.3 L1293.1 330.1 L1293.7 329.0 L1294.2 321.2 L1294.7 325.7 L1295.2 322.0 L1295.8 321.8 L1296.3 322.2 L1296.8 316.0 L1297.3 318.6 L1297.7 315.3 L1298.2 311.1 L1298.6 309.2 L1299.1 307.5 L1299.5 306.5 L1300.0 303.5 L1300.5 303.1 L1300.9 297.5 L1301.4 293.2 L1301.8 295.5 L1302.3 297.5 L1302.7 303.4 L1303.2 292.3 L1303.6 292.9 L1304.1 292.2 L1304.5 292.4 L1305.0 288.0 L1305.5 277.0 L1306.0 287.7 L1306.5 279.9 L1307.0 285.6 L1307.5 278.1 L1308.0 285.8 L1308.5 279.7 L1309.0 280.0 L1309.5 277.5 L1309.9 275.9 L1310.4 273.8 L1310.9 271.7 L1311.4 270.0 L1311.8 266.4 L1312.3 266.0 L1312.8 261.7 L1313.3 269.7 L1313.7 260.5 L1314.2 259.8 L1314.7 259.5 L1315.2 264.5 L1315.8 266.0 L1316.3 267.5 L1317.0 293.0 L1317.5 286.0 L1318.0 286.9 L1318.4 283.1 L1318.9 281.4 L1319.4 280.0 L1319.9 285.4 L1320.5 306.9 L1321.0 299.0 L1321.5 306.5 L1322.1 304.1 L1322.6 309.5 L1323.1 305.3 L1323.5 308.8 L1324.0 313.3 L1324.4 312.7 L1324.9 313.9 L1325.3 316.2 L1325.8 315.9 L1326.3 311.3 L1326.9 305.3 L1327.4 303.0 L1327.9 301.6 L1328.4 296.9 L1328.8 290.1 L1329.3 285.6 L1329.8 283.4 L1330.3 292.0 L1330.7 280.2 L1331.2 285.0 L1331.6 279.3 L1332.1 278.2 L1332.5 287.1 L1333.0 283.4 L1333.5 268.3 L1334.0 253.2 L1334.5 265.7 L1335.0 264.1 L1335.5 272.4 L1336.0 275.4 L1336.5 269.8 L1337.0 258.8 L1337.5 258.7 L1337.9 266.0 L1338.4 246.0 L1338.8 258.2 L1339.3 257.2 L1339.6 299.0 L1340.2 315.0 L1340.9 331.7 L1341.7 363.5 L1342.2 364.7 L1342.7 373.8 L1343.1 377.8 L1343.6 377.8 L1344.1 371.9 L1344.6 370.6 L1345.1 362.6 L1345.6 363.5 L1346.1 362.0 L1346.5 360.0 L1347.0 362.3 L1347.4 354.9 L1347.9 348.5 L1348.3 348.8 L1348.8 347.6 L1349.3 347.2 L1349.8 344.2 L1350.3 341.3 L1350.8 347.4 L1351.3 337.7 L1351.8 341.5 L1352.3 339.1 L1352.8 341.3 L1353.3 344.3 L1353.7 345.8 L1354.2 342.5 L1354.6 348.3 L1355.1 349.8 L1355.5 352.7 L1356.0 349.2 L1356.5 344.8 L1357.0 337.4 L1357.5 331.7 L1358.0 326.1 L1358.5 328.5 L1359.0 323.5 L1359.5 316.8 L1360.0 315.9 L1360.5 309.2 L1361.0 303.2 L1361.5 303.0 L1362.0 304.5 L1362.5 298.8 L1363.0 293.0 L1363.5 286.2 L1364.0 283.2 L1364.5 288.0 L1365.0 278.0 L1365.5 273.8 L1366.0 267.6 L1366.5 259.8 L1367.0 254.8 L1367.5 251.2 L1368.0 245.4 L1368.5 238.9 L1369.0 240.8 L1369.6 256.9 L1370.2 273.8 L1370.8 270.8 L1371.3 280.0 L1371.8 303.0 L1372.4 314.1 L1373.0 319.0 L1373.5 322.9 L1374.0 321.5 L1374.5 322.8 L1375.0 323.8 L1375.5 322.4 L1376.0 322.4 L1376.5 319.8 L1377.0 322.1 L1377.5 316.7 L1378.0 320.4 L1378.5 320.4 L1379.0 315.9 L1379.8 299.0 L1380.3 292.4 L1380.7 298.4 L1381.2 299.9 L1381.6 306.2 L1382.1 295.6 L1382.5 296.9 L1383.0 297.6 L1383.6 292.5 L1384.2 290.0 L1384.8 206.0 L1385.4 285.0 L1386.0 273.8 L1386.5 269.8 L1387.0 277.2 L1387.5 273.3 L1388.0 272.0 L1388.7 288.7 L1389.3 303.0 L1389.9 318.1 L1390.5 330.0 L1391.1 287.8 L1391.7 240.5 L1392.2 240.0 L1392.7 238.8 L1393.2 235.1 L1393.8 232.3 L1394.3 228.1 L1394.8 227.8 L1395.6 267.5 L1396.4 354.0 L1396.9 353.8 L1397.5 353.1 L1398.0 352.4 L1398.8 283.4 L1399.3 259.9 L1399.9 237.1 L1400.4 218.3 L1400.9 256.0 L1401.5 294.6 L1402.0 328.6 L1402.5 318.5 L1403.0 310.5 L1403.5 300.0 L1404.1 291.7 L1404.6 288.6 L1405.2 278.6 L1405.7 272.7 L1406.2 266.1 L1406.8 256.4 L1407.3 256.8 L1407.8 246.4 L1408.3 235.7 L1408.9 268.0 L1409.4 278.2 L1410.0 303.0 L1410.5 284.7 L1411.0 266.0 L1411.5 248.4 L1412.0 267.9 L1412.5 294.0 L1413.0 315.9 L1413.6 295.2 L1414.1 274.0 L1414.7 253.2 L1415.5 272.0 L1416.0 272.4 L1416.4 272.0 L1416.9 272.1 L1417.3 272.0 L1417.8 272.0 L1418.2 272.1 L1418.7 272.0 L1419.1 272.1 L1419.6 272.0 L1420.0 271.9 L1420.5 272.0 L1420.9 272.0 L1421.4 271.7 L1421.8 271.9 L1422.3 272.0 L1422.7 272.0 L1423.2 271.9 L1423.6 272.0 L1424.1 272.1 L1424.5 272.1 L1425.0 271.8 L1425.4 272.0 L1425.9 271.9 L1426.3 272.2 L1426.8 272.0 L1427.2 271.9 L1427.7 272.1 L1428.1 272.1 L1428.6 272.1 L1429.0 272.1 L1429.5 272.0 L1429.9 271.9 L1430.4 272.0 L1430.8 272.0 L1431.3 272.0 L1431.7 271.8 L1432.2 272.1 L1432.6 272.1 L1433.1 272.1 L1433.6 272.0 L1434.0 272.0 L1434.5 271.9 L1434.9 272.0 L1435.4 271.9 L1435.8 272.0 L1436.3 271.9 L1436.7 272.1 L1437.2 272.0 L1437.6 272.0 L1438.1 272.0 L1438.5 272.0 L1439.0 271.8 L1439.4 272.0 L1439.9 272.0 L1440.3 272.1 L1440.8 271.9 L1441.2 272.1 L1441.7 272.1 L1442.1 272.0 L1442.6 272.0 L1443.0 272.1 L1443.5 272.0 L1443.9 272.2 L1444.4 271.8 L1444.8 271.9 L1445.3 272.2 L1445.7 272.0 L1446.2 271.8 L1446.6 271.8 L1447.1 271.9 L1447.5 271.8 L1448.0 271.8 L1448.4 271.9 L1448.9 272.0 L1449.3 271.9 L1449.8 272.0 L1450.3 271.9 L1450.7 272.1 L1451.2 271.9 L1451.6 272.0 L1452.1 272.0 L1452.5 272.1 L1453.0 271.9 L1453.4 272.0 L1453.9 271.9 L1454.3 272.1 L1454.8 272.0 L1455.2 272.1 L1455.7 272.0 L1456.1 272.2 L1456.6 271.9 L1457.0 271.8 L1457.5 271.9 L1457.9 272.0 L1458.4 272.1 L1458.8 271.9 L1459.3 271.9 L1459.7 272.1 L1460.2 271.9 L1460.6 272.1 L1461.1 272.0 L1461.5 271.9 L1462.0 272.0 L1462.4 271.9 L1462.9 271.9 L1463.3 272.0 L1463.8 272.0 L1464.2 272.1 L1464.7 272.0 L1465.1 271.8 L1465.6 272.0 L1466.0 272.1 L1466.5 272.0 L1466.9 271.9 L1467.4 271.9 L1467.9 271.9 L1468.3 272.0 L1468.8 271.9 L1469.2 272.1 L1469.7 272.0 L1470.1 272.3 L1470.6 272.1 L1471.0 271.9 L1471.5 272.0 L1471.9 272.2 L1472.4 272.0 L1472.8 272.0 L1473.3 272.1 L1473.7 272.1 L1474.2 272.1 L1474.6 272.0 L1475.1 271.9 L1475.5 271.9 L1476.0 272.1 L1476.4 271.8 L1476.9 272.0 L1477.3 272.2 L1477.8 271.9 L1478.2 272.1 L1478.7 271.9 L1479.1 271.9 L1479.6 272.0 L1480.0 272.1 L1480.5 272.0 L1480.9 272.0 L1481.4 272.1 L1481.8 272.2 L1482.3 271.9 L1482.7 271.9 L1483.2 272.2 L1483.6 272.1 L1484.1 271.9 L1484.6 272.1 L1485.0 272.2 L1485.5 272.0 L1485.9 272.0 L1486.4 272.1 L1486.8 271.9 L1487.3 271.9 L1487.7 272.1 L1488.2 272.0 L1488.6 272.0 L1489.1 271.9 L1489.5 272.1 L1490.0 272.1 L1490.4 272.0 L1490.9 272.0 L1491.3 271.9 L1491.8 271.9 L1492.2 271.9 L1492.7 272.0 L1493.1 272.0 L1493.6 271.9 L1494.0 271.9 L1494.5 272.0 L1494.9 272.1 L1495.4 272.1 L1495.8 271.8 L1496.3 272.0 L1496.7 272.1 L1497.2 271.9 L1497.6 272.0 L1498.1 272.1 L1498.5 272.0 L1499.0 271.9 L1499.4 271.9 L1499.9 271.9 L1500.3 272.0 L1500.8 272.0 L1501.2 272.1 L1501.7 271.9 L1502.2 272.0 L1502.6 272.0 L1503.1 272.0 L1503.5 272.1 L1504.0 272.0 L1504.4 272.0 L1504.9 271.9 L1505.3 271.9 L1505.8 271.9 L1506.2 272.2 L1506.7 272.0 L1507.1 272.0 L1507.6 271.9 L1508.0 272.0 L1508.5 271.9 L1508.9 272.0 L1509.4 272.0 L1509.8 271.9 L1510.3 272.0 L1510.7 271.9 L1511.2 271.9 L1511.6 272.1 L1512.1 271.9 L1512.5 271.9 L1513.0 272.1 L1513.4 272.1 L1513.9 272.0 L1514.3 272.0 L1514.8 271.9 L1515.2 272.0 L1515.7 272.0 L1516.1 271.9 L1516.6 272.0 L1517.0 272.0 L1517.5 272.0 L1517.9 272.1 L1518.4 272.1 L1518.9 271.9 L1519.3 272.0 L1519.8 272.0 L1520.2 272.2 L1520.7 271.7 L1521.1 272.0 L1521.6 272.1 L1522.0 272.1 L1522.5 271.9 L1522.9 272.0 L1523.4 272.0 L1523.8 271.9 L1524.3 272.1 L1524.7 271.9 L1525.2 271.9 L1525.6 272.1 L1526.1 271.9 L1526.5 272.0 L1527.0 272.2 L1527.4 272.1 L1527.9 272.0 L1528.3 272.0 L1528.8 271.9 L1529.2 271.9 L1529.7 272.0 L1530.1 272.1 L1530.6 272.1 L1531.0 271.9 L1531.5 271.8 L1531.9 272.1 L1532.4 271.9 L1532.8 272.1 L1533.3 272.1 L1533.7 272.1 L1534.2 271.9 L1534.6 271.9 L1535.1 271.9 L1535.5 272.0 L1536.0 272.0" stroke="#00ffff"/>
</g>
<rect x="913.5" y="206.5" width="622.0" height="316.0" fill="none" stroke="#000" stroke-width="1.1"/>
<g stroke="#000" stroke-width="1.1">
<line x1="990.5" y1="522.5" x2="990.5" y2="527.7"/>
<line x1="1074.5" y1="522.5" x2="1074.5" y2="527.7"/>
<line x1="1157.5" y1="522.5" x2="1157.5" y2="527.7"/>
<line x1="1241.5" y1="522.5" x2="1241.5" y2="527.7"/>
<line x1="1325.5" y1="522.5" x2="1325.5" y2="527.7"/>
<line x1="1409.5" y1="522.5" x2="1409.5" y2="527.7"/>
<line x1="1493.5" y1="522.5" x2="1493.5" y2="527.7"/>
<line x1="908.3" y1="269.5" x2="913.5" y2="269.5"/>
<line x1="908.3" y1="334.5" x2="913.5" y2="334.5"/>
<line x1="908.3" y1="399.5" x2="913.5" y2="399.5"/>
<line x1="908.3" y1="465.5" x2="913.5" y2="465.5"/>
</g>
<g font-family="DejaVu Sans, sans-serif" font-size="13.9" fill="#000">
<text x="990.0" y="543" text-anchor="middle">100</text>
<text x="1074.0" y="543" text-anchor="middle">95</text>
<text x="1157.0" y="543" text-anchor="middle">90</text>
<text x="1241.0" y="543" text-anchor="middle">85</text>
<text x="1325.0" y="543" text-anchor="middle">80</text>
<text x="1409.0" y="543" text-anchor="middle">75</text>
<text x="1493.0" y="543" text-anchor="middle">70</text>
<text x="904" y="273.8" text-anchor="end">1000</text>
<text x="904" y="338.8" text-anchor="end">500</text>
<text x="904" y="403.8" text-anchor="end">0</text>
<text x="904" y="469.8" text-anchor="end">−500</text>
</g>
<rect x="920.5" y="213.5" width="299" height="66.5" rx="2.8" fill="#fff" fill-opacity="0.8" stroke="#ccc" stroke-opacity="0.8" stroke-width="1.1"/>
<line x1="926.2" y1="225.6" x2="954.6" y2="225.6" stroke="#0000ff" stroke-width="1.5"/>
<text x="965.2" y="229.8" font-family="DejaVu Sans, sans-serif" font-size="13.9" fill="#000" textLength="247.4" lengthAdjust="spacing">/olive/one/imu/linear_acceleration/x</text>
<line x1="926.2" y1="246.4" x2="954.6" y2="246.4" stroke="#ff0000" stroke-width="1.5"/>
<text x="965.2" y="250.9" font-family="DejaVu Sans, sans-serif" font-size="13.9" fill="#000" textLength="247.4" lengthAdjust="spacing">/olive/one/imu/linear_acceleration/y</text>
<line x1="926.2" y1="267.2" x2="954.6" y2="267.2" stroke="#00ffff" stroke-width="1.5"/>
<text x="965.2" y="272.0" font-family="DejaVu Sans, sans-serif" font-size="13.9" fill="#000" textLength="247.4" lengthAdjust="spacing">/olive/one/imu/linear_acceleration/z</text>
</svg>
<span class="t" style="left:61.3px;top:124.7px;letter-spacing:0.656px;">/olive/one/button/reset</span>
<span class="t" style="left:282.4px;top:124.7px;letter-spacing:0.171px;">std_msgs/msg/Bool</span>
<span class="t" style="left:717.8px;top:124.7px;letter-spacing:0.428px;">not monitored</span>
<span class="t" style="left:61.3px;top:141.7px;letter-spacing:0.307px;">/olive/one/camera/camera_info</span>
<span class="t" style="left:282.4px;top:141.7px;letter-spacing:0.033px;">sensor_msgs/msg/CameraInfo</span>
<span class="t" style="left:717.8px;top:141.7px;letter-spacing:0.428px;">not monitored</span>
<span class="t" style="left:61.3px;top:158.7px;letter-spacing:0.280px;">/olive/one/camera/compressed</span>
<span class="t" style="left:282.4px;top:158.7px;letter-spacing:-0.029px;">sensor_msgs/msg/CompressedImage</span>
<span class="t" style="left:717.8px;top:158.7px;letter-spacing:0.428px;">not monitored</span>
<span class="t" style="left:61.3px;top:175.7px;letter-spacing:0.524px;">/olive/one/imu</span>
<span class="t" style="left:282.4px;top:175.7px;letter-spacing:0.053px;">sensor_msgs/msg/Imu</span>
<span class="t" style="left:717.8px;top:175.7px;letter-spacing:0.428px;">not monitored</span>
<span class="t" style="left:61.3px;top:192.7px;letter-spacing:0.143px;">angular_velocity</span>
<span class="t" style="left:282.4px;top:192.7px;letter-spacing:0.279px;">geometry_msgs/Vector3</span>
<span class="t" style="left:61.3px;top:209.7px;letter-spacing:0.027px;">angular_velocity_covariance</span>
<span class="t" style="left:282.4px;top:209.7px;letter-spacing:0.363px;">double[9]</span>
<span class="t" style="left:61.3px;top:226.7px;letter-spacing:0.030px;">header</span>
<span class="t" style="left:282.4px;top:226.7px;letter-spacing:0.043px;">std_msgs/Header</span>
<span class="t" style="left:61.3px;top:243.7px;letter-spacing:0.136px;">linear_acceleration</span>
<span class="t" style="left:282.4px;top:243.7px;letter-spacing:0.279px;">geometry_msgs/Vector3</span>
<span class="t" style="left:81.4px;top:260.7px;letter-spacing:-0.300px;">x</span>
<span class="t" style="left:282.4px;top:260.7px;letter-spacing:0.276px;">double</span>
<span class="t" style="left:81.4px;top:277.7px;letter-spacing:-0.300px;">y</span>
<span class="t" style="left:282.4px;top:277.7px;letter-spacing:0.276px;">double</span>
<span class="t" style="left:81.4px;top:294.7px;letter-spacing:-0.900px;color:#fff;-webkit-text-stroke:0.1px #fff;">z</span>
<span class="t" style="left:282.4px;top:294.7px;letter-spacing:0.276px;color:#fff;-webkit-text-stroke:0.1px #fff;">double</span>
<span class="t" style="left:61.3px;top:311.7px;letter-spacing:0.037px;">linear_acceleration_covariance</span>
<span class="t" style="left:282.4px;top:311.7px;letter-spacing:0.363px;">double[9]</span>
<span class="t" style="left:61.3px;top:328.7px;letter-spacing:0.485px;">orientation</span>
<span class="t" style="left:282.4px;top:328.7px;letter-spacing:0.263px;">geometry_msgs/Quaternion</span>
<span class="t" style="left:61.3px;top:345.7px;letter-spacing:0.171px;">orientation_covariance</span>
<span class="t" style="left:282.4px;top:345.7px;letter-spacing:0.363px;">double[9]</span>
<span class="t" style="left:61.3px;top:362.7px;letter-spacing:0.434px;">/olive/one/led/user</span>
<span class="t" style="left:282.4px;top:362.7px;letter-spacing:0.171px;">std_msgs/msg/Bool</span>
<span class="t" style="left:717.8px;top:362.7px;letter-spacing:0.428px;">not monitored</span>
<span class="t" style="left:61.3px;top:379.7px;letter-spacing:0.495px;">/olive/one/magnetometer</span>
<span class="t" style="left:282.4px;top:379.7px;letter-spacing:0.101px;">sensor_msgs/msg/MagneticField</span>
<span class="t" style="left:717.8px;top:379.7px;letter-spacing:0.428px;">not monitored</span>
<span class="t" style="left:61.3px;top:396.7px;letter-spacing:0.470px;">/olive/one/status</span>
<span class="t" style="left:282.4px;top:396.7px;letter-spacing:0.151px;">diagnostic_msgs/msg/DiagnosticStatus</span>
<span class="t" style="left:717.8px;top:396.7px;letter-spacing:0.428px;">not monitored</span>
<span class="t" style="left:61.3px;top:413.7px;letter-spacing:0.231px;">/parameter_events</span>
<span class="t" style="left:282.4px;top:413.7px;letter-spacing:0.225px;">rcl_interfaces/msg/ParameterEvent</span>
<span class="t" style="left:717.8px;top:413.7px;letter-spacing:0.428px;">not monitored</span>
<span class="t" style="left:61.3px;top:430.7px;letter-spacing:0.592px;">/rosout</span>
<span class="t" style="left:282.4px;top:430.7px;letter-spacing:0.227px;">rcl_interfaces/msg/Log</span>
<span class="t" style="left:717.8px;top:430.7px;letter-spacing:0.428px;">not monitored</span>
<span class="t" style="left:20.0px;top:105.7px;letter-spacing:0.194px;">Topic</span>
<span class="t" style="left:281.0px;top:105.7px;letter-spacing:-0.133px;">Type</span>
<span class="t" style="left:555.6px;top:105.7px;letter-spacing:0.304px;">Bandwidth</span>
<span class="t" style="left:659.8px;top:105.7px;letter-spacing:-0.972px;">Hz</span>
<span class="t" style="left:716.0px;top:105.7px;letter-spacing:0.107px;">Value</span>
<span class="t" style="left:18.2px;top:53.4px;letter-spacing:-0.168px;"><u>F</u>ile</span>
<span class="t" style="left:57.3px;top:53.4px;letter-spacing:-0.058px;"><u>P</u>lugins</span>
<span class="t" style="left:121.4px;top:53.4px;letter-spacing:-0.042px;"><u>R</u>unning</span>
<span class="t" style="left:192.3px;top:53.4px;letter-spacing:-0.056px;">P<u>e</u>rspectives</span>
<span class="t" style="left:292.3px;top:53.4px;letter-spacing:-0.015px;"><u>H</u>elp</span>
<span class="t" style="left:24.3px;top:77.7px;letter-spacing:0.307px;">Topic Monitor</span>
<span class="t" style="left:860.8px;top:77.7px;letter-spacing:0.420px;">MatPlot</span>
<span class="t" style="left:849.4px;top:102.5px;letter-spacing:0.034px;">Topic</span>
<span class="t" style="left:889.6px;top:102.5px;letter-spacing:1.328px;">/</span>
<span class="t" style="left:1433.4px;top:102.5px;letter-spacing:0.250px;">autoscroll</span>
<span class="t" style="left:737.0px;top:77.7px;letter-spacing:-1.344px;">D</span>
<span class="t" style="left:1451.0px;top:77.7px;letter-spacing:-1.344px;">D</span>
<span class="t" style="left:795.6px;top:77.7px;letter-spacing:-0.200px;font-weight:bold;">-</span>
<span class="t" style="left:808.6px;top:77.7px;letter-spacing:-1.072px;">O</span>
<span class="t" style="left:1525.2px;top:77.7px;letter-spacing:-0.200px;font-weight:bold;">-</span>
<span class="t" style="left:1538.6px;top:77.7px;letter-spacing:-1.072px;">O</span>
<span class="t" style="left:743.3px;top:23.7px;letter-spacing:0.371px;color:#fff;-webkit-text-stroke:0;font-weight:bold;">Default - rqt</span>
</body></html>
